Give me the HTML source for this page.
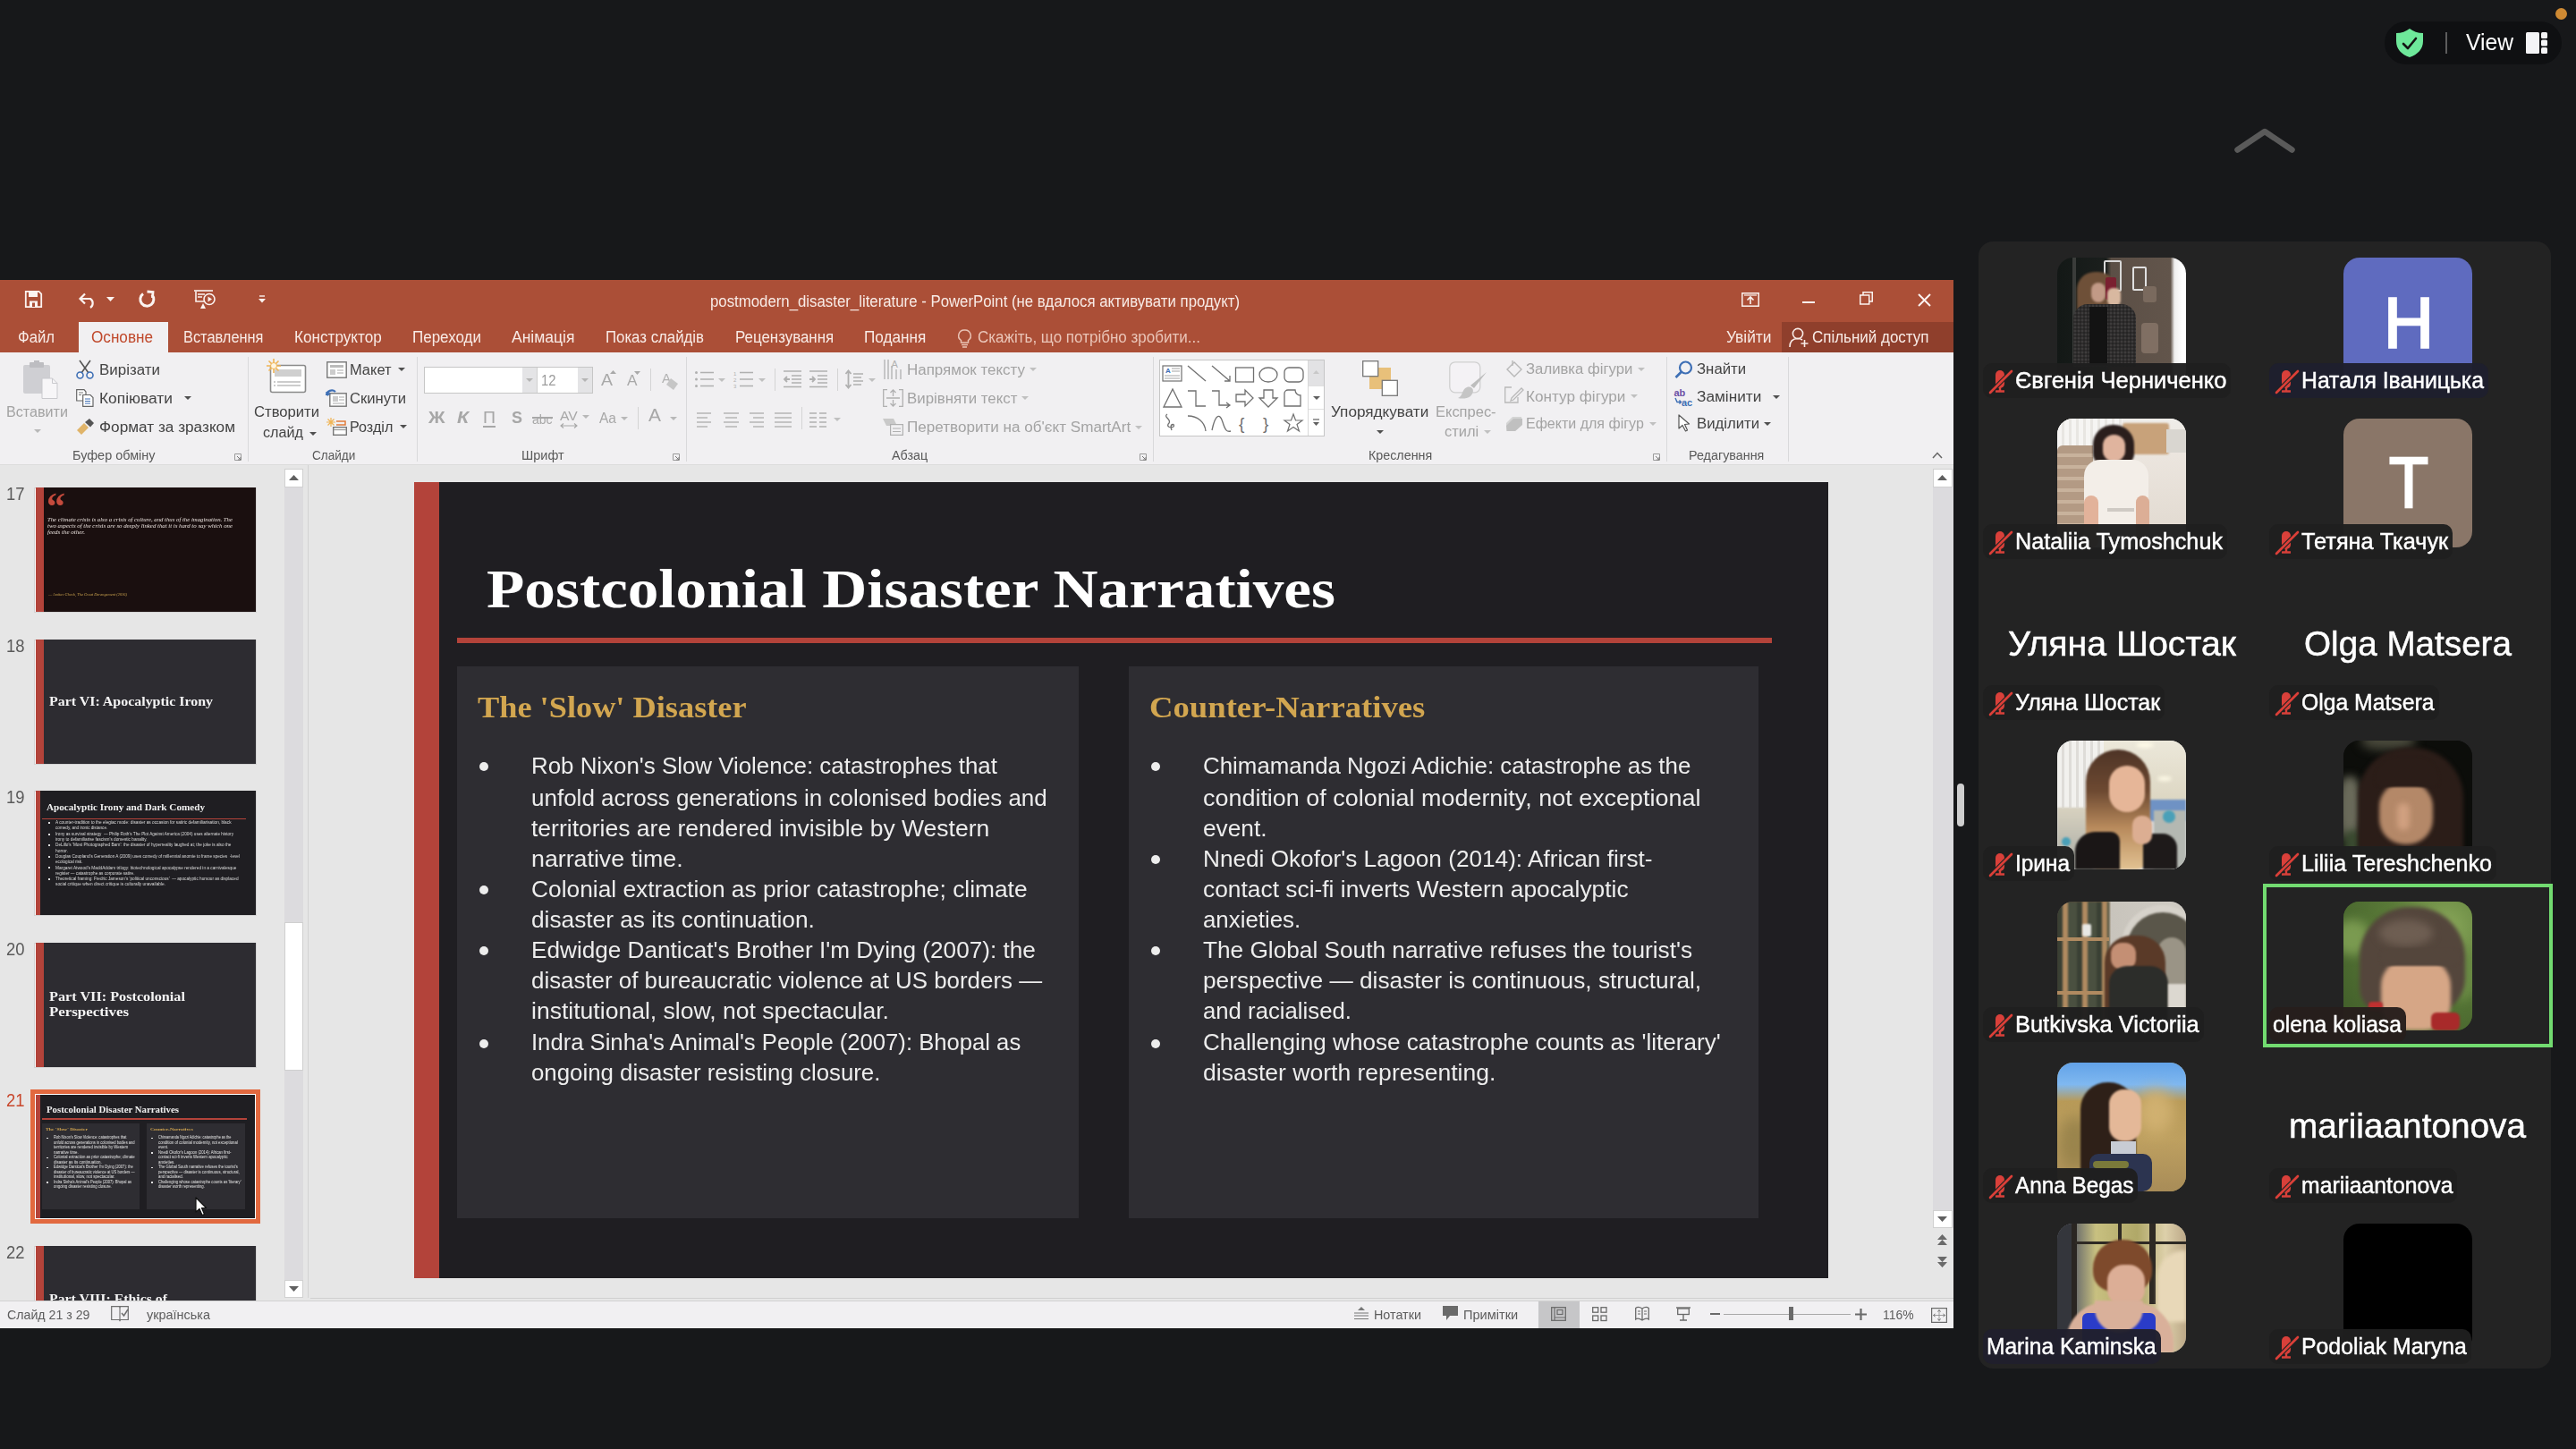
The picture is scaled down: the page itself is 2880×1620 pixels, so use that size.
<!DOCTYPE html>
<html><head><meta charset="utf-8"><title>Zoom - PowerPoint</title>
<style>
html,body{margin:0;padding:0;}
body{width:2880px;height:1620px;overflow:hidden;background:#17181a;position:relative;font-family:'Liberation Sans',sans-serif;}
.t{position:absolute;white-space:pre;}
svg{overflow:visible}
</style></head><body>
<div style="position:absolute;left:2666px;top:24px;width:198px;height:48px;background:#0f1012;border-radius:24px;"></div>
<svg style="position:absolute;left:2679px;top:32px;" width="30" height="32" viewBox="0 0 30 32"><path d="M15 0 C19 3 24 5 30 5 L30 14 C30 23 24 29 15 32 C6 29 0 23 0 14 L0 5 C6 5 11 3 15 0 Z" fill="#6ee89a"/><path d="M8 17 L13 22 L22 11" stroke="#141414" stroke-width="2.6" fill="none" stroke-linecap="round" stroke-linejoin="round"/></svg>
<div style="position:absolute;left:2734px;top:36px;width:2px;height:24px;background:#5c5c5c;"></div>
<div class="t" style="left:2757px;top:34.8px;font-size:25px;line-height:25px;color:#ffffff;font-weight:500;font-family:'Liberation Sans', sans-serif;font-style:normal;transform:scaleX(0.9860);transform-origin:0 0;">View</div>
<svg style="position:absolute;left:2824px;top:36px;" width="24" height="24" viewBox="0 0 24 24"><rect x="0" y="0" width="15" height="24" rx="1.5" fill="#f4f4f6"/><rect x="17" y="0" width="7" height="7" rx="1.5" fill="#f4f4f6"/><rect x="17" y="8.5" width="7" height="7" rx="1.5" fill="#f4f4f6"/><rect x="17" y="17" width="7" height="7" rx="1.5" fill="#f4f4f6"/></svg>
<div style="position:absolute;left:2857px;top:9px;width:13px;height:13px;border-radius:50%;background:#cf8a33"></div>
<svg style="position:absolute;left:2496px;top:140px;" width="74" height="36" viewBox="0 0 74 36"><polyline points="5.5,27.5 36,7 66.5,27.5" stroke="#5a5a5a" stroke-width="6.5" fill="none" stroke-linecap="round" stroke-linejoin="round"/></svg>
<div style="position:absolute;left:2188px;top:876px;width:8px;height:48px;background:#cfcfcf;border-radius:4px;"></div>
<div style="position:absolute;left:0px;top:313px;width:2184px;height:81px;background:#ab4f37;"></div>
<svg style="position:absolute;left:28px;top:325px;" width="19" height="19" viewBox="0 0 19 19"><path d="M0.8 0.8 H15.5 L18.2 3.5 V18.2 H0.8 Z" fill="none" stroke="#fbf3f0" stroke-width="1.8"/><rect x="4" y="1" width="10" height="6" fill="#fbf3f0"/><rect x="5" y="11.5" width="9" height="6.5" fill="#fbf3f0"/><rect x="8" y="13.5" width="3" height="4.5" fill="#ab4f37"/></svg>
<svg style="position:absolute;left:88px;top:327px;" width="21" height="17" viewBox="0 0 21 17"><path d="M2 7 H13 A6 6 0 0 1 13 17" fill="none" stroke="#fbf3f0" stroke-width="2.2"/><path d="M7 1.5 L1.5 7 L7 12.5" fill="none" stroke="#fbf3f0" stroke-width="2.2"/></svg>
<svg style="position:absolute;left:119px;top:332px;" width="9" height="5" viewBox="0 0 9 5"><path d="M0 0 H9 L4.5 5 Z" fill="#fbf3f0"/></svg>
<svg style="position:absolute;left:155px;top:325px;" width="19" height="19" viewBox="0 0 19 19"><path d="M14.8 4.5 A7.5 7.5 0 1 1 5 3.5" fill="none" stroke="#fbf3f0" stroke-width="3"/><path d="M9.5 1 L16 1.5 L15.5 8" fill="none" stroke="#fbf3f0" stroke-width="2.8"/></svg>
<svg style="position:absolute;left:217px;top:324px;" width="24" height="21" viewBox="0 0 24 21"><path d="M0 1 H21" stroke="#fbf3f0" stroke-width="1.6"/><path d="M2 2 V13 H12" fill="none" stroke="#fbf3f0" stroke-width="1.6"/><path d="M4 5 H12 M4 8 H9" stroke="#fbf3f0" stroke-width="1.4"/><circle cx="17" cy="10.5" r="6" fill="none" stroke="#fbf3f0" stroke-width="1.6"/><path d="M15.5 7.5 L20 10.5 L15.5 13.5 Z" fill="#fbf3f0"/><path d="M7 21 L10 15 L13 21 Z" fill="#fbf3f0"/></svg>
<svg style="position:absolute;left:289px;top:330px;" width="8" height="9" viewBox="0 0 8 9"><path d="M1 1 H7" stroke="#fbf3f0" stroke-width="1.4"/><path d="M0 4 H8 L4 8.5 Z" fill="#fbf3f0"/></svg>
<div class="t" style="left:794px;top:327.7px;font-size:18px;line-height:18px;color:#f8ebe6;font-weight:400;font-family:'Liberation Sans', sans-serif;font-style:normal;transform:scaleX(0.9330);transform-origin:0 0;">postmodern_disaster_literature - PowerPoint (не вдалося активувати продукт)</div>
<svg style="position:absolute;left:1947px;top:327px;" width="20" height="16" viewBox="0 0 20 16"><rect x="0.8" y="0.8" width="18.4" height="14.4" fill="none" stroke="#fbf3f0" stroke-width="1.5"/><path d="M10 13 V5 M6.5 8.5 L10 5 L13.5 8.5" fill="none" stroke="#fbf3f0" stroke-width="1.6"/><path d="M3 3 H17" stroke="#fbf3f0" stroke-width="1.2"/></svg>
<div style="position:absolute;left:2015px;top:337px;width:14px;height:2px;background:#fbf3f0;"></div>
<svg style="position:absolute;left:2079px;top:326px;" width="15" height="15" viewBox="0 0 15 15"><rect x="0.75" y="4" width="10" height="10" fill="none" stroke="#fbf3f0" stroke-width="1.5"/><path d="M4 4 V0.75 H14.25 V11 H10.75" fill="none" stroke="#fbf3f0" stroke-width="1.5"/></svg>
<svg style="position:absolute;left:2144px;top:328px;" width="15" height="15" viewBox="0 0 15 15"><path d="M1 1 L14 14 M14 1 L1 14" stroke="#fbf3f0" stroke-width="2"/></svg>
<div style="position:absolute;left:88px;top:360px;width:100px;height:34px;background:#f1f0f2;"></div>
<div class="t" style="left:20px;top:367.9px;font-size:18px;line-height:18px;color:#f8ebe6;font-weight:400;font-family:'Liberation Sans', sans-serif;font-style:normal;transform:scaleX(0.9262);transform-origin:0 0;">Файл</div>
<div class="t" style="left:102px;top:367.9px;font-size:18px;line-height:18px;color:#c0492c;font-weight:400;font-family:'Liberation Sans', sans-serif;font-style:normal;transform:scaleX(0.9521);transform-origin:0 0;">Основне</div>
<div class="t" style="left:205.4px;top:367.9px;font-size:18px;line-height:18px;color:#f8ebe6;font-weight:400;font-family:'Liberation Sans', sans-serif;font-style:normal;transform:scaleX(0.9099);transform-origin:0 0;">Вставлення</div>
<div class="t" style="left:329.2px;top:367.9px;font-size:18px;line-height:18px;color:#f8ebe6;font-weight:400;font-family:'Liberation Sans', sans-serif;font-style:normal;transform:scaleX(0.9528);transform-origin:0 0;">Конструктор</div>
<div class="t" style="left:461px;top:367.9px;font-size:18px;line-height:18px;color:#f8ebe6;font-weight:400;font-family:'Liberation Sans', sans-serif;font-style:normal;transform:scaleX(0.9442);transform-origin:0 0;">Переходи</div>
<div class="t" style="left:572.4px;top:367.9px;font-size:18px;line-height:18px;color:#f8ebe6;font-weight:400;font-family:'Liberation Sans', sans-serif;font-style:normal;transform:scaleX(0.9725);transform-origin:0 0;">Анімація</div>
<div class="t" style="left:677.3px;top:367.9px;font-size:18px;line-height:18px;color:#f8ebe6;font-weight:400;font-family:'Liberation Sans', sans-serif;font-style:normal;transform:scaleX(0.9328);transform-origin:0 0;">Показ слайдів</div>
<div class="t" style="left:821.5px;top:367.9px;font-size:18px;line-height:18px;color:#f8ebe6;font-weight:400;font-family:'Liberation Sans', sans-serif;font-style:normal;transform:scaleX(0.9391);transform-origin:0 0;">Рецензування</div>
<div class="t" style="left:966px;top:367.9px;font-size:18px;line-height:18px;color:#f8ebe6;font-weight:400;font-family:'Liberation Sans', sans-serif;font-style:normal;transform:scaleX(0.9532);transform-origin:0 0;">Подання</div>
<svg style="position:absolute;left:1071px;top:368px;" width="15" height="22" viewBox="0 0 15 22"><path d="M7.5 1 A6.3 6.3 0 0 1 11.5 12.5 V15 H3.5 V12.5 A6.3 6.3 0 0 1 7.5 1 Z" fill="none" stroke="#e9c3b5" stroke-width="1.5"/><path d="M4 17.5 H11 M5 20 H10" stroke="#e9c3b5" stroke-width="1.5"/></svg>
<div class="t" style="left:1093.2px;top:367.9px;font-size:18px;line-height:18px;color:#eac5b8;font-weight:400;font-family:'Liberation Sans', sans-serif;font-style:normal;transform:scaleX(0.9454);transform-origin:0 0;">Скажіть, що потрібно зробити...</div>
<div class="t" style="left:1929.6px;top:367.9px;font-size:18px;line-height:18px;color:#f8ebe6;font-weight:400;font-family:'Liberation Sans', sans-serif;font-style:normal;transform:scaleX(0.9648);transform-origin:0 0;">Увійти</div>
<div style="position:absolute;left:1992px;top:360px;width:192px;height:34px;background:#8f3f2c;"></div>
<svg style="position:absolute;left:2000px;top:366px;" width="23" height="23" viewBox="0 0 23 23"><circle cx="10" cy="7" r="5.6" fill="none" stroke="#f8ebe6" stroke-width="1.6"/><path d="M1 22 C1 15 5 12.5 10 12.5 C12 12.5 13.5 13 15 14" fill="none" stroke="#f8ebe6" stroke-width="1.6"/><path d="M17.5 14 V22 M13.5 18 H21.5" stroke="#f8ebe6" stroke-width="1.6"/></svg>
<div class="t" style="left:2025.6px;top:367.9px;font-size:18px;line-height:18px;color:#f8ebe6;font-weight:400;font-family:'Liberation Sans', sans-serif;font-style:normal;transform:scaleX(0.9430);transform-origin:0 0;">Спільний доступ</div>
<div style="position:absolute;left:0px;top:394px;width:2184px;height:126px;background:#f1f0f2;"></div>
<div style="position:absolute;left:0px;top:519px;width:2184px;height:1px;background:#dcdcdc;"></div>
<svg style="position:absolute;left:25px;top:403px;" width="40" height="43" viewBox="0 0 40 43"><rect x="1" y="5" width="30" height="32" rx="2" fill="#cfcfd3"/><rect x="8" y="2" width="16" height="6" rx="1" fill="#bdbdc1"/><rect x="13" y="0" width="6" height="4" fill="#bdbdc1"/><path d="M22 20 H33.5 L39 25.5 V42.5 H22 Z" fill="#f7f6f8" stroke="#c9c9cd" stroke-width="1"/><path d="M33.5 20 V25.5 H39" fill="none" stroke="#c9c9cd" stroke-width="1"/></svg>
<div class="t" style="left:7.3px;top:452.9px;font-size:16px;line-height:16px;color:#a3a3a3;font-weight:400;font-family:'Liberation Sans', sans-serif;font-style:normal;transform:scaleX(1.0084);transform-origin:0 0;">Вставити</div>
<svg style="position:absolute;left:38px;top:480px;" width="8" height="4" viewBox="0 0 8 4"><path d="M0 0 H8 L4 4 Z" fill="#b8b8b8"/></svg>
<svg style="position:absolute;left:85px;top:403px;" width="20" height="21" viewBox="0 0 20 21"><path d="M4 0 L14 14 M16 0 L6 14" stroke="#555" stroke-width="1.6"/><circle cx="4.5" cy="16.5" r="3.5" fill="none" stroke="#3e6fb5" stroke-width="1.6"/><circle cx="15.5" cy="16.5" r="3.5" fill="none" stroke="#3e6fb5" stroke-width="1.6"/></svg>
<div class="t" style="left:111px;top:406.0px;font-size:16px;line-height:16px;color:#444444;font-weight:400;font-family:'Liberation Sans', sans-serif;font-style:normal;transform:scaleX(1.0589);transform-origin:0 0;">Вирізати</div>
<svg style="position:absolute;left:85px;top:435px;" width="20" height="20" viewBox="0 0 20 20"><path d="M0.7 0.7 H9 L11 3 V13 H0.7 Z" fill="#fff" stroke="#666" stroke-width="1.2"/><path d="M7.7 6.5 H16 L19 9.5 V19.3 H7.7 Z" fill="#fff" stroke="#666" stroke-width="1.2"/><path d="M10 11 H16 M10 13.5 H16 M10 16 H16" stroke="#3e6fb5" stroke-width="1"/><path d="M3 4 H8 M3 6.5 H6" stroke="#777" stroke-width="1"/></svg>
<div class="t" style="left:111px;top:438.4px;font-size:16px;line-height:16px;color:#444444;font-weight:400;font-family:'Liberation Sans', sans-serif;font-style:normal;transform:scaleX(1.0850);transform-origin:0 0;">Копіювати</div>
<svg style="position:absolute;left:206px;top:443px;" width="8" height="4" viewBox="0 0 8 4"><path d="M0 0 H8 L4 4 Z" fill="#505050"/></svg>
<svg style="position:absolute;left:86px;top:468px;" width="20" height="18" viewBox="0 0 20 18"><path d="M0 13 L8 5 L13 10 L5 18 Z" fill="#e0b46a"/><path d="M9 4 L14 0 L19 5 L15 9.5 Z" fill="#555"/></svg>
<div class="t" style="left:111px;top:469.9px;font-size:16px;line-height:16px;color:#444444;font-weight:400;font-family:'Liberation Sans', sans-serif;font-style:normal;transform:scaleX(1.0755);transform-origin:0 0;">Формат за зразком</div>
<div class="t" style="left:81.2px;top:502.1px;font-size:14px;line-height:14px;color:#595959;font-weight:400;font-family:'Liberation Sans', sans-serif;font-style:normal;transform:scaleX(1.0315);transform-origin:0 0;">Буфер обміну</div>
<svg style="position:absolute;left:262px;top:507px;" width="8" height="8" viewBox="0 0 8 8"><path d="M0.5 0.5 H7.5 V7.5 H0.5 Z" fill="none" stroke="#9a9a9a" stroke-width="1"/><path d="M3 3 L7 7 M4 7 H7 V4" stroke="#7a7a7a" stroke-width="1" fill="none"/></svg>
<div style="position:absolute;left:277px;top:399px;width:1px;height:117px;background:#d9d9db;"></div>
<svg style="position:absolute;left:298px;top:401px;" width="45" height="39" viewBox="0 0 45 39"><rect x="4.5" y="7.5" width="39" height="30" rx="2" fill="#fff" stroke="#8a8a8a" stroke-width="1.6"/><rect x="9" y="12" width="30" height="8" fill="#cfcfcf"/><path d="M12 26 H38 M12 30 H38 M8 26 H10 M8 30 H10" stroke="#9a9a9a" stroke-width="1.2"/><g stroke="#f0b455" stroke-width="1.6"><path d="M8 0 V16 M0 8 H16 M2.5 2.5 L13.5 13.5 M13.5 2.5 L2.5 13.5"/></g><circle cx="8" cy="8" r="3.5" fill="#fff5e0" stroke="#f0b455" stroke-width="1"/></svg>
<div class="t" style="left:284.3px;top:452.9px;font-size:16px;line-height:16px;color:#444444;font-weight:400;font-family:'Liberation Sans', sans-serif;font-style:normal;transform:scaleX(1.0398);transform-origin:0 0;">Створити</div>
<div class="t" style="left:293.7px;top:476.4px;font-size:16px;line-height:16px;color:#444444;font-weight:400;font-family:'Liberation Sans', sans-serif;font-style:normal;transform:scaleX(1.0109);transform-origin:0 0;">слайд</div>
<svg style="position:absolute;left:346px;top:483px;" width="8" height="4" viewBox="0 0 8 4"><path d="M0 0 H8 L4 4 Z" fill="#505050"/></svg>
<svg style="position:absolute;left:365px;top:404px;" width="23" height="19" viewBox="0 0 23 19"><rect x="0.8" y="0.8" width="21.4" height="17.4" fill="#fff" stroke="#777" stroke-width="1.4"/><rect x="4" y="4" width="15" height="3" fill="#bbb"/><rect x="4" y="9" width="6" height="6" fill="#ccc"/><path d="M12 10 H19 M12 13 H19" stroke="#aaa" stroke-width="1.2"/></svg>
<div class="t" style="left:391.4px;top:406.0px;font-size:16px;line-height:16px;color:#444444;font-weight:400;font-family:'Liberation Sans', sans-serif;font-style:normal;transform:scaleX(1.0269);transform-origin:0 0;">Макет</div>
<svg style="position:absolute;left:445px;top:411px;" width="8" height="4" viewBox="0 0 8 4"><path d="M0 0 H8 L4 4 Z" fill="#505050"/></svg>
<svg style="position:absolute;left:364px;top:435px;" width="24" height="20" viewBox="0 0 24 20"><rect x="4.8" y="4.8" width="18.4" height="14.4" fill="#fff" stroke="#777" stroke-width="1.4"/><rect x="8" y="8" width="6" height="6" fill="#ccc"/><path d="M15 9 H21 M15 12 H21 M8 16 H21" stroke="#aaa" stroke-width="1.2"/><path d="M1 7 A6 6 0 0 1 11 3" fill="none" stroke="#3e6fb5" stroke-width="2.2"/><path d="M0 3 L2 8 L6 5 Z" fill="#3e6fb5"/></svg>
<div class="t" style="left:391.4px;top:438.0px;font-size:16px;line-height:16px;color:#444444;font-weight:400;font-family:'Liberation Sans', sans-serif;font-style:normal;transform:scaleX(1.0397);transform-origin:0 0;">Скинути</div>
<svg style="position:absolute;left:365px;top:467px;" width="23" height="20" viewBox="0 0 23 20"><g stroke="#f0b455" stroke-width="1.2"><path d="M5 0 V10 M0 5 H10 M1.5 1.5 L8.5 8.5 M8.5 1.5 L1.5 8.5"/></g><path d="M11 4 H21 V8 H11" fill="none" stroke="#e07b3b" stroke-width="1.5"/><rect x="7.7" y="10.7" width="14.6" height="8.6" fill="#fff" stroke="#777" stroke-width="1.4"/><path d="M8 13.5 H22" stroke="#999" stroke-width="1.2"/></svg>
<div class="t" style="left:391.4px;top:469.9px;font-size:16px;line-height:16px;color:#444444;font-weight:400;font-family:'Liberation Sans', sans-serif;font-style:normal;transform:scaleX(1.0082);transform-origin:0 0;">Розділ</div>
<svg style="position:absolute;left:447px;top:475px;" width="8" height="4" viewBox="0 0 8 4"><path d="M0 0 H8 L4 4 Z" fill="#505050"/></svg>
<div class="t" style="left:348.5px;top:502.1px;font-size:14px;line-height:14px;color:#595959;font-weight:400;font-family:'Liberation Sans', sans-serif;font-style:normal;transform:scaleX(0.9684);transform-origin:0 0;">Слайди</div>
<div style="position:absolute;left:466px;top:399px;width:1px;height:117px;background:#d9d9db;"></div>
<div style="position:absolute;left:473.5px;top:410px;width:189px;height:30px;background:#ffffff;box-sizing:border-box;border:1px solid #c6c6c6;"></div>
<div style="position:absolute;left:583.5px;top:411px;width:16px;height:28px;background:#e4e4e6;"></div>
<div style="position:absolute;left:600px;top:411px;width:1px;height:28px;background:#d0d0d0;"></div>
<div style="position:absolute;left:646px;top:411px;width:15.5px;height:28px;background:#e4e4e6;"></div>
<svg style="position:absolute;left:588px;top:423px;" width="8" height="4" viewBox="0 0 8 4"><path d="M0 0 H8 L4 4 Z" fill="#b5b5b5"/></svg>
<svg style="position:absolute;left:650px;top:423px;" width="8" height="4" viewBox="0 0 8 4"><path d="M0 0 H8 L4 4 Z" fill="#b5b5b5"/></svg>
<div class="t" style="left:605.4px;top:418.0px;font-size:16px;line-height:16px;color:#9c9c9c;font-weight:400;font-family:'Liberation Sans', sans-serif;font-style:normal;transform:scaleX(0.9271);transform-origin:0 0;">12</div>
<div class="t" style="left:672px;top:416.3px;font-size:18px;line-height:18px;color:#a9a9a9;font-weight:400;font-family:'Liberation Sans', sans-serif;font-style:normal;transform:scaleX(1.0819);transform-origin:0 0;">A</div>
<svg style="position:absolute;left:682px;top:414px;" width="7" height="4" viewBox="0 0 7 4"><path d="M0 4 L3.5 0 L7 4 Z" fill="#a9a9a9"/></svg>
<div class="t" style="left:700.8px;top:418.0px;font-size:16px;line-height:16px;color:#a9a9a9;font-weight:400;font-family:'Liberation Sans', sans-serif;font-style:normal;transform:scaleX(1.0776);transform-origin:0 0;">A</div>
<svg style="position:absolute;left:709px;top:415px;" width="7" height="4" viewBox="0 0 7 4"><path d="M0 0 L3.5 4 L7 0 Z" fill="#a9a9a9"/></svg>
<div style="position:absolute;left:727px;top:412px;width:1px;height:25px;background:#d4d4d4;"></div>
<div class="t" style="left:740px;top:416.1px;font-size:14px;line-height:14px;color:#b3b3b3;font-weight:400;font-family:'Liberation Sans', sans-serif;font-style:normal;transform:scaleX(1.0702);transform-origin:0 0;">A</div>
<svg style="position:absolute;left:745px;top:423px;" width="13" height="13" viewBox="0 0 13 13"><path d="M5 0 L13 6 L8 13 L0 7 Z" fill="#c6c6c6"/></svg>
<div class="t" style="left:478.8px;top:457.2px;font-size:19px;line-height:19px;color:#a7a7a7;font-weight:700;font-family:'Liberation Sans', sans-serif;font-style:normal;transform:scaleX(1.0764);transform-origin:0 0;">Ж</div>
<div class="t" style="left:510.8px;top:457.2px;font-size:19px;line-height:19px;color:#a7a7a7;font-weight:700;font-family:'Liberation Sans', sans-serif;font-style:normal;transform:scaleX(1.1198);transform-origin:0 0;font-style:italic;">К</div>
<div class="t" style="left:539.7px;top:458.0px;font-size:18px;line-height:18px;color:#a7a7a7;font-weight:400;font-family:'Liberation Sans', sans-serif;font-style:normal;transform:scaleX(1.0821);transform-origin:0 0;">П</div>
<div style="position:absolute;left:539.5px;top:476px;width:14.5px;height:1.5px;background:#a7a7a7;"></div>
<div class="t" style="left:571.7px;top:457.2px;font-size:19px;line-height:19px;color:#a7a7a7;font-weight:700;font-family:'Liberation Sans', sans-serif;font-style:normal;transform:scaleX(0.9458);transform-origin:0 0;">S</div>
<div class="t" style="left:595.2px;top:460.6px;font-size:15px;line-height:15px;color:#a7a7a7;font-weight:400;font-family:'Liberation Sans', sans-serif;font-style:normal;transform:scaleX(0.9302);transform-origin:0 0;">abc</div>
<div style="position:absolute;left:595px;top:466px;width:23px;height:1.5px;background:#a7a7a7;"></div>
<div class="t" style="left:626px;top:457.2px;font-size:15px;line-height:15px;color:#a7a7a7;font-weight:400;font-family:'Liberation Sans', sans-serif;font-style:normal;transform:scaleX(1.0420);transform-origin:0 0;">AV</div>
<svg style="position:absolute;left:626px;top:473px;" width="20" height="6" viewBox="0 0 20 6"><path d="M1 3 H19 M4 0.5 L1 3 L4 5.5 M16 0.5 L19 3 L16 5.5" fill="none" stroke="#a7a7a7" stroke-width="1.1"/></svg>
<svg style="position:absolute;left:651px;top:464px;" width="8" height="4" viewBox="0 0 8 4"><path d="M0 0 H8 L4 4 Z" fill="#b8b8b8"/></svg>
<div class="t" style="left:670px;top:458.9px;font-size:17px;line-height:17px;color:#a7a7a7;font-weight:400;font-family:'Liberation Sans', sans-serif;font-style:normal;transform:scaleX(0.9136);transform-origin:0 0;">Aa</div>
<svg style="position:absolute;left:694px;top:466px;" width="8" height="4" viewBox="0 0 8 4"><path d="M0 0 H8 L4 4 Z" fill="#b8b8b8"/></svg>
<div style="position:absolute;left:712.5px;top:455px;width:1px;height:25px;background:#d4d4d4;"></div>
<div class="t" style="left:725.4px;top:453.1px;font-size:21px;line-height:21px;color:#a7a7a7;font-weight:400;font-family:'Liberation Sans', sans-serif;font-style:normal;transform:scaleX(0.9989);transform-origin:0 0;">A</div>
<svg style="position:absolute;left:749px;top:466px;" width="8" height="4" viewBox="0 0 8 4"><path d="M0 0 H8 L4 4 Z" fill="#b8b8b8"/></svg>
<div class="t" style="left:582.8px;top:502.1px;font-size:14px;line-height:14px;color:#595959;font-weight:400;font-family:'Liberation Sans', sans-serif;font-style:normal;transform:scaleX(1.0334);transform-origin:0 0;">Шрифт</div>
<svg style="position:absolute;left:752px;top:507px;" width="8" height="8" viewBox="0 0 8 8"><path d="M0.5 0.5 H7.5 V7.5 H0.5 Z" fill="none" stroke="#9a9a9a" stroke-width="1"/><path d="M3 3 L7 7 M4 7 H7 V4" stroke="#7a7a7a" stroke-width="1" fill="none"/></svg>
<div style="position:absolute;left:767px;top:399px;width:1px;height:117px;background:#d9d9db;"></div>
<svg style="position:absolute;left:777px;top:415px;" width="21" height="18" viewBox="0 0 21 18"><circle cx="1.5" cy="1.5" r="1.5" fill="#b0b0b0"/><circle cx="1.5" cy="9" r="1.5" fill="#b0b0b0"/><circle cx="1.5" cy="16.5" r="1.5" fill="#b0b0b0"/><path d="M6 1.5 H21 M6 9 H21 M6 16.5 H21" stroke="#b0b0b0" stroke-width="1.4"/></svg>
<svg style="position:absolute;left:803px;top:423px;" width="8" height="4" viewBox="0 0 8 4"><path d="M0 0 H8 L4 4 Z" fill="#c0c0c0"/></svg>
<svg style="position:absolute;left:820px;top:414px;" width="22" height="20" viewBox="0 0 22 20"><text x="0" y="6" font-size="6" fill="#b0b0b0" font-family="Liberation Sans">1</text><text x="0" y="13" font-size="6" fill="#b0b0b0" font-family="Liberation Sans">2</text><text x="0" y="20" font-size="6" fill="#b0b0b0" font-family="Liberation Sans">3</text><path d="M7 2.5 H22 M7 10 H22 M7 17.5 H22" stroke="#b0b0b0" stroke-width="1.4"/></svg>
<svg style="position:absolute;left:848px;top:423px;" width="8" height="4" viewBox="0 0 8 4"><path d="M0 0 H8 L4 4 Z" fill="#c0c0c0"/></svg>
<div style="position:absolute;left:866px;top:412px;width:1px;height:25px;background:#d4d4d4;"></div>
<svg style="position:absolute;left:876px;top:414px;" width="21" height="19" viewBox="0 0 21 19"><path d="M0 1 H20 M9 6 H20 M9 10 H20 M9 14 H20 M0 18.5 H20" stroke="#b0b0b0" stroke-width="1.4"/><path d="M7 10 H1 M4 7 L1 10 L4 13" stroke="#b0b0b0" stroke-width="1.8" fill="none"/></svg>
<svg style="position:absolute;left:905px;top:414px;" width="21" height="19" viewBox="0 0 21 19"><path d="M0 1 H20 M9 6 H20 M9 10 H20 M9 14 H20 M0 18.5 H20" stroke="#b0b0b0" stroke-width="1.4"/><path d="M0 10 H6 M3 7 L6 10 L3 13" stroke="#b0b0b0" stroke-width="1.8" fill="none"/></svg>
<div style="position:absolute;left:935.5px;top:412px;width:1px;height:25px;background:#d4d4d4;"></div>
<svg style="position:absolute;left:945px;top:413px;" width="20" height="22" viewBox="0 0 20 22"><path d="M3.5 2 V20 M0.5 5 L3.5 1.5 L6.5 5 M0.5 17 L3.5 20.5 L6.5 17" stroke="#b0b0b0" stroke-width="1.8" fill="none"/><path d="M9 5 H20 M9 9 H18 M9 13 H20 M9 17 H18" stroke="#b0b0b0" stroke-width="1.4"/></svg>
<svg style="position:absolute;left:971px;top:423px;" width="8" height="4" viewBox="0 0 8 4"><path d="M0 0 H8 L4 4 Z" fill="#c0c0c0"/></svg>
<svg style="position:absolute;left:779px;top:461px;" width="20" height="18" viewBox="0 0 20 18"><path d="M0 1 H16" stroke="#b0b0b0" stroke-width="1.4"/><path d="M0 6 H12" stroke="#b0b0b0" stroke-width="1.4"/><path d="M0 11 H16" stroke="#b0b0b0" stroke-width="1.4"/><path d="M0 16 H12" stroke="#b0b0b0" stroke-width="1.4"/></svg>
<svg style="position:absolute;left:807.5px;top:461px;" width="20" height="18" viewBox="0 0 20 18"><path d="M1 1 H18" stroke="#b0b0b0" stroke-width="1.4"/><path d="M3 6 H16" stroke="#b0b0b0" stroke-width="1.4"/><path d="M1 11 H18" stroke="#b0b0b0" stroke-width="1.4"/><path d="M3 16 H16" stroke="#b0b0b0" stroke-width="1.4"/></svg>
<svg style="position:absolute;left:838px;top:461px;" width="20" height="18" viewBox="0 0 20 18"><path d="M0 1 H16" stroke="#b0b0b0" stroke-width="1.4"/><path d="M4 6 H16" stroke="#b0b0b0" stroke-width="1.4"/><path d="M0 11 H16" stroke="#b0b0b0" stroke-width="1.4"/><path d="M4 16 H16" stroke="#b0b0b0" stroke-width="1.4"/></svg>
<svg style="position:absolute;left:866px;top:461px;" width="20" height="18" viewBox="0 0 20 18"><path d="M0 1 H19" stroke="#b0b0b0" stroke-width="1.4"/><path d="M0 6 H19" stroke="#b0b0b0" stroke-width="1.4"/><path d="M0 11 H19" stroke="#b0b0b0" stroke-width="1.4"/><path d="M0 16 H19" stroke="#b0b0b0" stroke-width="1.4"/></svg>
<div style="position:absolute;left:896px;top:455px;width:1px;height:25px;background:#d4d4d4;"></div>
<svg style="position:absolute;left:905px;top:461px;" width="20" height="18" viewBox="0 0 20 18"><path d="M0 1 H8 M11 1 H19" stroke="#b0b0b0" stroke-width="1.4"/><path d="M0 6 H8 M11 6 H19" stroke="#b0b0b0" stroke-width="1.4"/><path d="M0 11 H8 M11 11 H19" stroke="#b0b0b0" stroke-width="1.4"/><path d="M0 16 H8 M11 16 H19" stroke="#b0b0b0" stroke-width="1.4"/></svg>
<svg style="position:absolute;left:932px;top:467px;" width="8" height="4" viewBox="0 0 8 4"><path d="M0 0 H8 L4 4 Z" fill="#c0c0c0"/></svg>
<svg style="position:absolute;left:988px;top:401px;" width="22" height="24" viewBox="0 0 22 24"><path d="M1 1 V23 M5 1 V23 M9 8 V23 M14 12 V23 M19 12 V23" stroke="#b0b0b0" stroke-width="1.3"/><text x="8.5" y="10" font-size="11" fill="#b0b0b0" font-family="Liberation Sans">A</text></svg>
<div class="t" style="left:1014px;top:406.1px;font-size:16px;line-height:16px;color:#a3a3a3;font-weight:400;font-family:'Liberation Sans', sans-serif;font-style:normal;transform:scaleX(1.0596);transform-origin:0 0;">Напрямок тексту</div>
<svg style="position:absolute;left:1151px;top:411px;" width="8" height="4" viewBox="0 0 8 4"><path d="M0 0 H8 L4 4 Z" fill="#c0c0c0"/></svg>
<svg style="position:absolute;left:987px;top:435px;" width="23" height="20" viewBox="0 0 23 20"><path d="M5 0.7 H0.7 V19.3 H5 M18 0.7 H22.3 V19.3 H18" fill="none" stroke="#b0b0b0" stroke-width="1.3"/><path d="M11.5 1 V8 M8.5 4 L11.5 1 L14.5 4 M11.5 12 V19 M8.5 16 L11.5 19 L14.5 16 M4 10 H19" fill="none" stroke="#b0b0b0" stroke-width="1.3"/></svg>
<div class="t" style="left:1014px;top:438.0px;font-size:16px;line-height:16px;color:#a3a3a3;font-weight:400;font-family:'Liberation Sans', sans-serif;font-style:normal;transform:scaleX(1.0518);transform-origin:0 0;">Вирівняти текст</div>
<svg style="position:absolute;left:1142px;top:443px;" width="8" height="4" viewBox="0 0 8 4"><path d="M0 0 H8 L4 4 Z" fill="#c0c0c0"/></svg>
<svg style="position:absolute;left:987px;top:467px;" width="23" height="20" viewBox="0 0 23 20"><path d="M0 1 H12 L16 9 H4 Z" fill="#c9c9c9"/><rect x="8.6" y="7.6" width="13.8" height="11.8" fill="#f1f0f2" stroke="#b0b0b0" stroke-width="1.2"/><path d="M11 12 H20 M11 15.5 H20" stroke="#b0b0b0" stroke-width="1.1"/></svg>
<div class="t" style="left:1014px;top:470.4px;font-size:16px;line-height:16px;color:#a3a3a3;font-weight:400;font-family:'Liberation Sans', sans-serif;font-style:normal;transform:scaleX(1.0679);transform-origin:0 0;">Перетворити на об&#x27;єкт SmartArt</div>
<svg style="position:absolute;left:1269px;top:476px;" width="8" height="4" viewBox="0 0 8 4"><path d="M0 0 H8 L4 4 Z" fill="#c0c0c0"/></svg>
<div class="t" style="left:996.9px;top:502.1px;font-size:14px;line-height:14px;color:#595959;font-weight:400;font-family:'Liberation Sans', sans-serif;font-style:normal;transform:scaleX(1.0208);transform-origin:0 0;">Абзац</div>
<svg style="position:absolute;left:1274px;top:507px;" width="8" height="8" viewBox="0 0 8 8"><path d="M0.5 0.5 H7.5 V7.5 H0.5 Z" fill="none" stroke="#9a9a9a" stroke-width="1"/><path d="M3 3 L7 7 M4 7 H7 V4" stroke="#7a7a7a" stroke-width="1" fill="none"/></svg>
<div style="position:absolute;left:1289px;top:399px;width:1px;height:117px;background:#d9d9db;"></div>
<div style="position:absolute;left:1296px;top:401.5px;width:185px;height:86px;background:#ffffff;box-sizing:border-box;border:1px solid #c6c6c6;"></div>
<div style="position:absolute;left:1462px;top:402.5px;width:1px;height:84px;background:#d8d8d8;"></div>
<div style="position:absolute;left:1463px;top:402.5px;width:17px;height:28px;background:#e2e2e4;"></div>
<div style="position:absolute;left:1463px;top:431px;width:17px;height:1px;background:#e0e0e0;"></div>
<div style="position:absolute;left:1463px;top:457px;width:17px;height:1px;background:#e0e0e0;"></div>
<svg style="position:absolute;left:1468px;top:414px;" width="7" height="4" viewBox="0 0 7 4"><path d="M0 4 L3.5 0 L7 4 Z" fill="#c8c8c8"/></svg>
<svg style="position:absolute;left:1468px;top:443px;" width="8" height="4" viewBox="0 0 8 4"><path d="M0 0 H8 L4 4 Z" fill="#606060"/></svg>
<svg style="position:absolute;left:1468px;top:468px;" width="7" height="8" viewBox="0 0 7 8"><path d="M0 1 H7" stroke="#606060" stroke-width="1.2"/><path d="M0 4 H7 L3.5 8 Z" fill="#606060"/></svg>
<svg style="position:absolute;left:1296px;top:401.5px;" width="166" height="86" viewBox="0 0 166 86"><rect x="4" y="7" width="21" height="17" fill="#fff" stroke="#707070" stroke-width="1.2"/><text x="7" y="15" font-size="8" font-weight="bold" fill="#3e6fb5" font-family="Liberation Sans">A</text><path d="M14 10 H23 M14 13 H23 M6 18 H23 M6 21 H23" stroke="#999" stroke-width="0.9"/><path d="M32 7 L52 24" stroke="#707070" stroke-width="1.3"/><path d="M59 7 L79 24 M73 24 H79 V18" stroke="#707070" stroke-width="1.3" fill="none"/><rect x="85.5" y="9" width="20" height="16" fill="none" stroke="#707070" stroke-width="1.3"/><ellipse cx="122" cy="17" rx="10" ry="8" fill="none" stroke="#707070" stroke-width="1.3"/><rect x="140" y="9" width="21" height="16" rx="5" fill="none" stroke="#707070" stroke-width="1.3"/><path d="M5 53 L15 33 L25 53 Z" fill="none" stroke="#707070" stroke-width="1.3"/><path d="M32 35 H41 V52 H52" fill="none" stroke="#707070" stroke-width="1.3"/><path d="M59 35 H67 V51 H79 M75 48 L79 51 L75 54" fill="none" stroke="#707070" stroke-width="1.3"/><path d="M86 39 H96 V34 L105 43 L96 52 V47 H86 Z" fill="none" stroke="#707070" stroke-width="1.3"/><path d="M117 34 H127 V43 H132 L122 53 L112 43 H117 Z" fill="none" stroke="#707070" stroke-width="1.3"/><path d="M140 52 V38 A4 4 0 0 1 144 34 H152 A6 6 0 0 0 158 40 V52 Z" fill="none" stroke="#707070" stroke-width="1.3"/><path d="M9 61 C4 64 14 67 11 71 C7 75 13 77 16 75 C18 72 13 71 13 76 L14 79" fill="none" stroke="#707070" stroke-width="1.3"/><path d="M32 63 C43 63 51 70 52 80" fill="none" stroke="#707070" stroke-width="1.3"/><path d="M59 79 C63 60 68 60 71 70 C74 80 76 81 80 80" fill="none" stroke="#707070" stroke-width="1.3"/><text x="89" y="78" font-size="19" fill="#707070" font-family="Liberation Sans">{</text><text x="116" y="78" font-size="19" fill="#707070" font-family="Liberation Sans">}</text><path d="M150 61 L152.5 68 H160 L154 72.5 L156.5 80 L150 75.5 L143.5 80 L146 72.5 L140 68 H147.5 Z" fill="none" stroke="#707070" stroke-width="1.2"/></svg>
<svg style="position:absolute;left:1523px;top:403px;" width="40" height="40" viewBox="0 0 40 40"><rect x="8" y="8" width="24" height="24" fill="#e8c07a"/><rect x="0.7" y="0.7" width="17" height="17" fill="#fff" stroke="#777" stroke-width="1.3"/><rect x="22.3" y="22.3" width="17" height="17" fill="#fff" stroke="#777" stroke-width="1.3"/></svg>
<div class="t" style="left:1487.8px;top:453.1px;font-size:16px;line-height:16px;color:#444444;font-weight:400;font-family:'Liberation Sans', sans-serif;font-style:normal;transform:scaleX(1.0711);transform-origin:0 0;">Упорядкувати</div>
<svg style="position:absolute;left:1539px;top:481px;" width="8" height="4" viewBox="0 0 8 4"><path d="M0 0 H8 L4 4 Z" fill="#505050"/></svg>
<svg style="position:absolute;left:1620px;top:404px;" width="42" height="42" viewBox="0 0 42 42"><rect x="0.8" y="0.8" width="34" height="34" rx="6" fill="#f4f2f5" stroke="#d0d0d0" stroke-width="1.3"/><path d="M42 12 L28 30 L24 27 Z" fill="#bdbdbd"/><path d="M20 29 C26 27 30 33 24 39 C20 42 14 42 10 41 C16 39 14 31 20 29 Z" fill="#c5c5c5"/></svg>
<div class="t" style="left:1604.6px;top:453.1px;font-size:16px;line-height:16px;color:#a3a3a3;font-weight:400;font-family:'Liberation Sans', sans-serif;font-style:normal;transform:scaleX(1.0299);transform-origin:0 0;">Експрес-</div>
<div class="t" style="left:1614.5px;top:474.6px;font-size:16px;line-height:16px;color:#a3a3a3;font-weight:400;font-family:'Liberation Sans', sans-serif;font-style:normal;transform:scaleX(1.0254);transform-origin:0 0;">стилі</div>
<svg style="position:absolute;left:1659px;top:481px;" width="8" height="4" viewBox="0 0 8 4"><path d="M0 0 H8 L4 4 Z" fill="#c0c0c0"/></svg>
<svg style="position:absolute;left:1683px;top:403px;" width="20" height="19" viewBox="0 0 20 19"><path d="M2 10 L10 2 L18 10 L10 18 Z" fill="none" stroke="#b8b8b8" stroke-width="1.4"/><path d="M8 0 V6" stroke="#b8b8b8" stroke-width="1.4"/></svg>
<div class="t" style="left:1706px;top:405.4px;font-size:16px;line-height:16px;color:#a3a3a3;font-weight:400;font-family:'Liberation Sans', sans-serif;font-style:normal;transform:scaleX(1.0442);transform-origin:0 0;">Заливка фігури</div>
<svg style="position:absolute;left:1831px;top:411px;" width="8" height="4" viewBox="0 0 8 4"><path d="M0 0 H8 L4 4 Z" fill="#c0c0c0"/></svg>
<svg style="position:absolute;left:1682px;top:432px;" width="22" height="19" viewBox="0 0 22 19"><path d="M8 1 H0.7 V18 H15 V12" fill="none" stroke="#b8b8b8" stroke-width="1.3"/><path d="M8 13 L19 2 L21 4 L10 15 L7 16 Z" fill="none" stroke="#b8b8b8" stroke-width="1.3"/></svg>
<div class="t" style="left:1706px;top:435.9px;font-size:16px;line-height:16px;color:#a3a3a3;font-weight:400;font-family:'Liberation Sans', sans-serif;font-style:normal;transform:scaleX(1.0718);transform-origin:0 0;">Контур фігури</div>
<svg style="position:absolute;left:1823px;top:441px;" width="8" height="4" viewBox="0 0 8 4"><path d="M0 0 H8 L4 4 Z" fill="#c0c0c0"/></svg>
<svg style="position:absolute;left:1682px;top:464px;" width="21" height="19" viewBox="0 0 21 19"><path d="M2 9 L9 2 H19 L20 10 L12 18 H2 Z" fill="#d4d4d4"/><path d="M2 12 L10 4 L20 4 V11 L12 18 H3 Z" fill="#c0c0c0"/></svg>
<div class="t" style="left:1706px;top:466.4px;font-size:16px;line-height:16px;color:#a3a3a3;font-weight:400;font-family:'Liberation Sans', sans-serif;font-style:normal;transform:scaleX(1.0009);transform-origin:0 0;">Ефекти для фігур</div>
<svg style="position:absolute;left:1844px;top:472px;" width="8" height="4" viewBox="0 0 8 4"><path d="M0 0 H8 L4 4 Z" fill="#c0c0c0"/></svg>
<div class="t" style="left:1529.7px;top:502.1px;font-size:14px;line-height:14px;color:#595959;font-weight:400;font-family:'Liberation Sans', sans-serif;font-style:normal;transform:scaleX(1.0210);transform-origin:0 0;">Креслення</div>
<svg style="position:absolute;left:1848px;top:507px;" width="8" height="8" viewBox="0 0 8 8"><path d="M0.5 0.5 H7.5 V7.5 H0.5 Z" fill="none" stroke="#9a9a9a" stroke-width="1"/><path d="M3 3 L7 7 M4 7 H7 V4" stroke="#7a7a7a" stroke-width="1" fill="none"/></svg>
<div style="position:absolute;left:1863px;top:399px;width:1px;height:117px;background:#d9d9db;"></div>
<svg style="position:absolute;left:1872px;top:403px;" width="21" height="20" viewBox="0 0 21 20"><circle cx="12.5" cy="8" r="6.5" fill="none" stroke="#3e6fb5" stroke-width="2.2"/><path d="M8 12.5 L1.5 19" stroke="#3e6fb5" stroke-width="2.6"/></svg>
<div class="t" style="left:1897.3px;top:405.4px;font-size:16px;line-height:16px;color:#444444;font-weight:400;font-family:'Liberation Sans', sans-serif;font-style:normal;transform:scaleX(1.0473);transform-origin:0 0;">Знайти</div>
<svg style="position:absolute;left:1871px;top:433px;" width="23" height="21" viewBox="0 0 23 21"><text x="0.5" y="9.5" font-size="11" font-weight="bold" fill="#6a4fa5" font-family="Liberation Sans">ab</text><text x="9" y="20.5" font-size="11" font-weight="bold" fill="#3e6fb5" font-family="Liberation Sans">ac</text><path d="M2 12 L4 16.5 H8.5 M6.5 14.5 L8.5 16.5 L6.5 18.5" fill="none" stroke="#3e6fb5" stroke-width="1.4"/></svg>
<div class="t" style="left:1897.3px;top:435.9px;font-size:16px;line-height:16px;color:#444444;font-weight:400;font-family:'Liberation Sans', sans-serif;font-style:normal;transform:scaleX(1.0766);transform-origin:0 0;">Замінити</div>
<svg style="position:absolute;left:1982px;top:442px;" width="8" height="4" viewBox="0 0 8 4"><path d="M0 0 H8 L4 4 Z" fill="#505050"/></svg>
<svg style="position:absolute;left:1876px;top:463px;" width="14" height="20" viewBox="0 0 14 20"><path d="M1 1 L1 16 L5 12.5 L8.5 19 L10.5 18 L7.5 11.5 L12.5 11 Z" fill="#fff" stroke="#555" stroke-width="1.2" stroke-linejoin="round"/></svg>
<div class="t" style="left:1897.3px;top:466.4px;font-size:16px;line-height:16px;color:#444444;font-weight:400;font-family:'Liberation Sans', sans-serif;font-style:normal;transform:scaleX(1.0455);transform-origin:0 0;">Виділити</div>
<svg style="position:absolute;left:1972px;top:472px;" width="8" height="4" viewBox="0 0 8 4"><path d="M0 0 H8 L4 4 Z" fill="#505050"/></svg>
<div class="t" style="left:1888px;top:502.1px;font-size:14px;line-height:14px;color:#595959;font-weight:400;font-family:'Liberation Sans', sans-serif;font-style:normal;transform:scaleX(1.0234);transform-origin:0 0;">Редагування</div>
<div style="position:absolute;left:1999px;top:399px;width:1px;height:117px;background:#d9d9db;"></div>
<svg style="position:absolute;left:2160px;top:505px;" width="12" height="8" viewBox="0 0 12 8"><path d="M1 7 L6 1.5 L11 7" fill="none" stroke="#666" stroke-width="1.5"/></svg>
<div style="position:absolute;left:0px;top:520px;width:2184px;height:934px;background:#e6e6e6;"></div>
<div style="position:absolute;left:318px;top:524px;width:21px;height:927px;background:#dcdbde;"></div>
<div style="position:absolute;left:318px;top:524px;width:21px;height:20.5px;background:#ffffff;box-sizing:border-box;border:1px solid #d0d0d0;"></div>
<svg style="position:absolute;left:323px;top:531px;" width="11" height="6" viewBox="0 0 11 6"><path d="M0 6 L5.5 0 L11 6 Z" fill="#606060"/></svg>
<div style="position:absolute;left:318px;top:1031px;width:21px;height:166px;background:#ffffff;box-sizing:border-box;border:1px solid #cfcfcf;"></div>
<div style="position:absolute;left:318px;top:1430.5px;width:21px;height:20.5px;background:#ffffff;box-sizing:border-box;border:1px solid #d0d0d0;"></div>
<svg style="position:absolute;left:323px;top:1438.0px;" width="11" height="6" viewBox="0 0 11 6"><path d="M0 0 H11 L5.5 6 Z" fill="#606060"/></svg>
<div style="position:absolute;left:344px;top:520px;width:1px;height:931px;background:#d2d2d2;"></div>
<div style="position:absolute;left:37.7px;top:544.5px;width:249.8px;height:140.3px;background:#ffffff;box-sizing:border-box;border:1px solid #d3d3d3;"></div>
<div style="position:absolute;left:40px;top:545px;width:246px;height:139px;background:#1a0f0f;"></div>
<div style="position:absolute;left:40px;top:545px;width:9px;height:139px;background:#b3433a;"></div>
<div class="t" style="left:52px;top:543.6px;font-size:45px;line-height:45px;color:#c44a3c;font-weight:700;font-family:'Liberation Serif', serif;font-style:normal;transform:scaleX(0.9333);transform-origin:0 0;">“</div>
<div class="t" style="left:53px;top:577.5px;font-size:6px;line-height:6px;color:#e8e0dc;font-weight:400;font-family:'Liberation Serif', serif;font-style:italic;transform:scaleX(1.1243);transform-origin:0 0;">The climate crisis is also a crisis of culture, and thus of the imagination. The</div>
<div class="t" style="left:53px;top:585.0px;font-size:6px;line-height:6px;color:#e8e0dc;font-weight:400;font-family:'Liberation Serif', serif;font-style:italic;transform:scaleX(1.1361);transform-origin:0 0;">two aspects of the crisis are so deeply linked that it is hard to say which one</div>
<div class="t" style="left:53px;top:592.0px;font-size:6px;line-height:6px;color:#e8e0dc;font-weight:400;font-family:'Liberation Serif', serif;font-style:italic;transform:scaleX(1.1611);transform-origin:0 0;">feeds the other.</div>
<div class="t" style="left:54px;top:663.3px;font-size:4.5px;line-height:4.5px;color:#c9a24e;font-weight:400;font-family:'Liberation Serif', serif;font-style:italic;transform:scaleX(0.9791);transform-origin:0 0;">— Amitav Ghosh, The Great Derangement (2016)</div>
<div class="t" style="left:6.7px;top:541.5px;font-size:20px;line-height:20px;color:#5a5a5a;font-weight:400;font-family:'Liberation Sans', sans-serif;font-style:normal;transform:scaleX(0.9213);transform-origin:0 0;">17</div>
<div style="position:absolute;left:37.7px;top:714.5px;width:249.8px;height:140.3px;background:#ffffff;box-sizing:border-box;border:1px solid #d3d3d3;"></div>
<div style="position:absolute;left:40px;top:715px;width:246px;height:139px;background:#2d2c31;"></div>
<div style="position:absolute;left:40px;top:715px;width:9px;height:139px;background:#b3433a;"></div>
<div class="t" style="left:55px;top:777.9px;font-size:14px;line-height:14px;color:#f4f4f4;font-weight:700;font-family:'Liberation Serif', serif;font-style:normal;transform:scaleX(1.1375);transform-origin:0 0;">Part VI: Apocalyptic Irony</div>
<div class="t" style="left:6.7px;top:711.5px;font-size:20px;line-height:20px;color:#5a5a5a;font-weight:400;font-family:'Liberation Sans', sans-serif;font-style:normal;transform:scaleX(0.9213);transform-origin:0 0;">18</div>
<div style="position:absolute;left:37.7px;top:883.5px;width:249.8px;height:140.3px;background:#ffffff;box-sizing:border-box;border:1px solid #d3d3d3;"></div>
<div style="position:absolute;left:40px;top:884px;width:246px;height:139px;background:#1f1e22;"></div>
<div style="position:absolute;left:40px;top:884px;width:5px;height:139px;background:#b3433a;"></div>
<div class="t" style="left:52px;top:898.3px;font-size:10.5px;line-height:10.5px;color:#f0f0f0;font-weight:700;font-family:'Liberation Serif', serif;font-style:normal;transform:scaleX(1.0621);transform-origin:0 0;">Apocalyptic Irony and Dark Comedy</div>
<div style="position:absolute;left:47px;top:915px;width:228px;height:1px;background:#b3433a;"></div>
<div style="position:absolute;left:54px;top:919.0px;width:2px;height:2px;background:#dcdcdc;"></div>
<div class="t" style="left:62.3px;top:918.1px;font-size:4.6px;line-height:4.6px;color:#dcdcdc;font-weight:400;font-family:'Liberation Sans', sans-serif;font-style:normal;transform:scaleX(1.0316);transform-origin:0 0;">A counter-tradition to the elegiac mode: disaster as occasion for satiric defamiliarisation, black</div>
<div class="t" style="left:62.3px;top:924.4px;font-size:4.6px;line-height:4.6px;color:#dcdcdc;font-weight:400;font-family:'Liberation Sans', sans-serif;font-style:normal;transform:scaleX(1.0071);transform-origin:0 0;">comedy, and ironic distance.</div>
<div style="position:absolute;left:54px;top:931.6px;width:2px;height:2px;background:#dcdcdc;"></div>
<div class="t" style="left:62.3px;top:930.7px;font-size:4.6px;line-height:4.6px;color:#dcdcdc;font-weight:400;font-family:'Liberation Sans', sans-serif;font-style:normal;transform:scaleX(1.0120);transform-origin:0 0;">Irony as survival strategy  — Philip Roth&#x27;s The Plot Against America (2004) uses alternate history</div>
<div class="t" style="left:62.3px;top:937.0px;font-size:4.6px;line-height:4.6px;color:#dcdcdc;font-weight:400;font-family:'Liberation Sans', sans-serif;font-style:normal;transform:scaleX(1.0264);transform-origin:0 0;">irony to defamiliarise fascism&#x27;s domestic banality.</div>
<div style="position:absolute;left:54px;top:944.2px;width:2px;height:2px;background:#dcdcdc;"></div>
<div class="t" style="left:62.3px;top:943.3px;font-size:4.6px;line-height:4.6px;color:#dcdcdc;font-weight:400;font-family:'Liberation Sans', sans-serif;font-style:normal;transform:scaleX(1.0283);transform-origin:0 0;">DeLillo&#x27;s &#x27;Most Photographed Barn&#x27;: the disaster of hyperreality laughed at; the joke is also the</div>
<div class="t" style="left:62.3px;top:949.6px;font-size:4.6px;line-height:4.6px;color:#dcdcdc;font-weight:400;font-family:'Liberation Sans', sans-serif;font-style:normal;transform:scaleX(1.0541);transform-origin:0 0;">horror.</div>
<div style="position:absolute;left:54px;top:956.8px;width:2px;height:2px;background:#dcdcdc;"></div>
<div class="t" style="left:62.3px;top:955.9px;font-size:4.6px;line-height:4.6px;color:#dcdcdc;font-weight:400;font-family:'Liberation Sans', sans-serif;font-style:normal;transform:scaleX(1.0193);transform-origin:0 0;">Douglas Coupland&#x27;s Generation A (2009) uses comedy of millennial anomie to frame species  -level</div>
<div class="t" style="left:62.3px;top:962.2px;font-size:4.6px;line-height:4.6px;color:#dcdcdc;font-weight:400;font-family:'Liberation Sans', sans-serif;font-style:normal;transform:scaleX(1.0119);transform-origin:0 0;">ecological risk.</div>
<div style="position:absolute;left:54px;top:969.4px;width:2px;height:2px;background:#dcdcdc;"></div>
<div class="t" style="left:62.3px;top:968.5px;font-size:4.6px;line-height:4.6px;color:#dcdcdc;font-weight:400;font-family:'Liberation Sans', sans-serif;font-style:normal;transform:scaleX(1.0292);transform-origin:0 0;">Margaret Atwood&#x27;s MaddAddam trilogy: biotechnological apocalypse rendered in a carnivalesque</div>
<div class="t" style="left:62.3px;top:974.8px;font-size:4.6px;line-height:4.6px;color:#dcdcdc;font-weight:400;font-family:'Liberation Sans', sans-serif;font-style:normal;transform:scaleX(1.0163);transform-origin:0 0;">register — catastrophe as corporate satire.</div>
<div style="position:absolute;left:54px;top:982.0px;width:2px;height:2px;background:#dcdcdc;"></div>
<div class="t" style="left:62.3px;top:981.1px;font-size:4.6px;line-height:4.6px;color:#dcdcdc;font-weight:400;font-family:'Liberation Sans', sans-serif;font-style:normal;transform:scaleX(1.0251);transform-origin:0 0;">Theoretical framing: Fredric Jameson&#x27;s &#x27;political unconscious&#x27;  — apocalyptic humour as displaced</div>
<div class="t" style="left:62.3px;top:987.4px;font-size:4.6px;line-height:4.6px;color:#dcdcdc;font-weight:400;font-family:'Liberation Sans', sans-serif;font-style:normal;transform:scaleX(1.0381);transform-origin:0 0;">social critique when direct critique is culturally unavailable.</div>
<div class="t" style="left:6.7px;top:880.5px;font-size:20px;line-height:20px;color:#5a5a5a;font-weight:400;font-family:'Liberation Sans', sans-serif;font-style:normal;transform:scaleX(0.9213);transform-origin:0 0;">19</div>
<div style="position:absolute;left:37.7px;top:1053.5px;width:249.8px;height:140.3px;background:#ffffff;box-sizing:border-box;border:1px solid #d3d3d3;"></div>
<div style="position:absolute;left:40px;top:1054px;width:246px;height:139px;background:#2d2c31;"></div>
<div style="position:absolute;left:40px;top:1054px;width:9px;height:139px;background:#b3433a;"></div>
<div class="t" style="left:55px;top:1107.9px;font-size:14px;line-height:14px;color:#f4f4f4;font-weight:700;font-family:'Liberation Serif', serif;font-style:normal;transform:scaleX(1.1586);transform-origin:0 0;">Part VII: Postcolonial</div>
<div class="t" style="left:55px;top:1124.9px;font-size:14px;line-height:14px;color:#f4f4f4;font-weight:700;font-family:'Liberation Serif', serif;font-style:normal;transform:scaleX(1.2050);transform-origin:0 0;">Perspectives</div>
<div class="t" style="left:6.5px;top:1050.5px;font-size:20px;line-height:20px;color:#5a5a5a;font-weight:400;font-family:'Liberation Sans', sans-serif;font-style:normal;transform:scaleX(0.9213);transform-origin:0 0;">20</div>
<div style="position:absolute;left:34px;top:1217.6px;width:257px;height:150px;background:#e2693f;"></div>
<div style="position:absolute;left:39px;top:1222.6px;width:247px;height:140.2px;background:#ffffff;"></div>
<div style="position:absolute;left:40px;top:1223.6px;width:245px;height:138.2px;background:#1f1e22;"></div>
<div style="position:absolute;left:40px;top:1223.6px;width:5px;height:138.2px;background:#b3433a;"></div>
<div class="t" style="left:52px;top:1235.8px;font-size:10.5px;line-height:10.5px;color:#f0f0f0;font-weight:700;font-family:'Liberation Serif', serif;font-style:normal;transform:scaleX(1.0287);transform-origin:0 0;">Postcolonial Disaster Narratives</div>
<div style="position:absolute;left:47px;top:1250.3px;width:229px;height:1.4px;background:#b3433a;"></div>
<div style="position:absolute;left:47px;top:1255.5px;width:109px;height:96px;background:#2e2d32;"></div>
<div style="position:absolute;left:164px;top:1255.5px;width:109.5px;height:96px;background:#2e2d32;"></div>
<div class="t" style="left:51px;top:1260.0px;font-size:5px;line-height:5px;color:#d2a650;font-weight:700;font-family:'Liberation Serif', serif;font-style:normal;transform:scaleX(1.1355);transform-origin:0 0;">The &#x27;Slow&#x27; Disaster</div>
<div class="t" style="left:168px;top:1260.0px;font-size:5px;line-height:5px;color:#d2a650;font-weight:700;font-family:'Liberation Serif', serif;font-style:normal;transform:scaleX(1.1420);transform-origin:0 0;">Counter-Narratives</div>
<div style="position:absolute;left:52px;top:1271.5px;width:1.5px;height:1.5px;background:#e0e0e0;"></div>
<div class="t" style="left:60px;top:1270.1px;font-size:4.6px;line-height:4.6px;color:#e6e6e6;font-weight:400;font-family:'Liberation Sans', sans-serif;font-style:normal;transform:scaleX(0.8803);transform-origin:0 0;">Rob Nixon&#x27;s Slow Violence: catastrophes that</div>
<div class="t" style="left:60px;top:1275.6px;font-size:4.6px;line-height:4.6px;color:#e6e6e6;font-weight:400;font-family:'Liberation Sans', sans-serif;font-style:normal;transform:scaleX(0.8895);transform-origin:0 0;">unfold across generations in colonised bodies and</div>
<div class="t" style="left:60px;top:1281.1px;font-size:4.6px;line-height:4.6px;color:#e6e6e6;font-weight:400;font-family:'Liberation Sans', sans-serif;font-style:normal;transform:scaleX(0.9377);transform-origin:0 0;">territories are rendered invisible by Western</div>
<div class="t" style="left:60px;top:1286.6px;font-size:4.6px;line-height:4.6px;color:#e6e6e6;font-weight:400;font-family:'Liberation Sans', sans-serif;font-style:normal;transform:scaleX(0.9533);transform-origin:0 0;">narrative time.</div>
<div style="position:absolute;left:52px;top:1293.5px;width:1.5px;height:1.5px;background:#e0e0e0;"></div>
<div class="t" style="left:60px;top:1292.1px;font-size:4.6px;line-height:4.6px;color:#e6e6e6;font-weight:400;font-family:'Liberation Sans', sans-serif;font-style:normal;transform:scaleX(0.9366);transform-origin:0 0;">Colonial extraction as prior catastrophe; climate</div>
<div class="t" style="left:60px;top:1297.6px;font-size:4.6px;line-height:4.6px;color:#e6e6e6;font-weight:400;font-family:'Liberation Sans', sans-serif;font-style:normal;transform:scaleX(0.9680);transform-origin:0 0;">disaster as its continuation.</div>
<div style="position:absolute;left:52px;top:1304.5px;width:1.5px;height:1.5px;background:#e0e0e0;"></div>
<div class="t" style="left:60px;top:1303.1px;font-size:4.6px;line-height:4.6px;color:#e6e6e6;font-weight:400;font-family:'Liberation Sans', sans-serif;font-style:normal;transform:scaleX(0.8965);transform-origin:0 0;">Edwidge Danticat&#x27;s Brother I&#x27;m Dying (2007): the</div>
<div class="t" style="left:60px;top:1308.6px;font-size:4.6px;line-height:4.6px;color:#e6e6e6;font-weight:400;font-family:'Liberation Sans', sans-serif;font-style:normal;transform:scaleX(0.8942);transform-origin:0 0;">disaster of bureaucratic violence at US borders —</div>
<div class="t" style="left:60px;top:1314.1px;font-size:4.6px;line-height:4.6px;color:#e6e6e6;font-weight:400;font-family:'Liberation Sans', sans-serif;font-style:normal;transform:scaleX(0.9891);transform-origin:0 0;">institutional, slow, not spectacular.</div>
<div style="position:absolute;left:52px;top:1321.0px;width:1.5px;height:1.5px;background:#e0e0e0;"></div>
<div class="t" style="left:60px;top:1319.6px;font-size:4.6px;line-height:4.6px;color:#e6e6e6;font-weight:400;font-family:'Liberation Sans', sans-serif;font-style:normal;transform:scaleX(0.8870);transform-origin:0 0;">Indra Sinha&#x27;s Animal&#x27;s People (2007): Bhopal as</div>
<div class="t" style="left:60px;top:1325.1px;font-size:4.6px;line-height:4.6px;color:#e6e6e6;font-weight:400;font-family:'Liberation Sans', sans-serif;font-style:normal;transform:scaleX(0.9321);transform-origin:0 0;">ongoing disaster resisting closure.</div>
<div style="position:absolute;left:169px;top:1271.5px;width:1.5px;height:1.5px;background:#e0e0e0;"></div>
<div class="t" style="left:177px;top:1270.1px;font-size:4.6px;line-height:4.6px;color:#e6e6e6;font-weight:400;font-family:'Liberation Sans', sans-serif;font-style:normal;transform:scaleX(0.8411);transform-origin:0 0;">Chimamanda Ngozi Adichie: catastrophe as the</div>
<div class="t" style="left:177px;top:1275.6px;font-size:4.6px;line-height:4.6px;color:#e6e6e6;font-weight:400;font-family:'Liberation Sans', sans-serif;font-style:normal;transform:scaleX(0.9355);transform-origin:0 0;">condition of colonial modernity, not exceptional</div>
<div class="t" style="left:177px;top:1281.1px;font-size:4.6px;line-height:4.6px;color:#e6e6e6;font-weight:400;font-family:'Liberation Sans', sans-serif;font-style:normal;transform:scaleX(0.8869);transform-origin:0 0;">event.</div>
<div style="position:absolute;left:169px;top:1288.0px;width:1.5px;height:1.5px;background:#e0e0e0;"></div>
<div class="t" style="left:177px;top:1286.6px;font-size:4.6px;line-height:4.6px;color:#e6e6e6;font-weight:400;font-family:'Liberation Sans', sans-serif;font-style:normal;transform:scaleX(0.9229);transform-origin:0 0;">Nnedi Okofor&#x27;s Lagoon (2014): African first-</div>
<div class="t" style="left:177px;top:1292.1px;font-size:4.6px;line-height:4.6px;color:#e6e6e6;font-weight:400;font-family:'Liberation Sans', sans-serif;font-style:normal;transform:scaleX(0.9374);transform-origin:0 0;">contact sci-fi inverts Western apocalyptic</div>
<div class="t" style="left:177px;top:1297.6px;font-size:4.6px;line-height:4.6px;color:#e6e6e6;font-weight:400;font-family:'Liberation Sans', sans-serif;font-style:normal;transform:scaleX(0.9525);transform-origin:0 0;">anxieties.</div>
<div style="position:absolute;left:169px;top:1304.5px;width:1.5px;height:1.5px;background:#e0e0e0;"></div>
<div class="t" style="left:177px;top:1303.1px;font-size:4.6px;line-height:4.6px;color:#e6e6e6;font-weight:400;font-family:'Liberation Sans', sans-serif;font-style:normal;transform:scaleX(0.9262);transform-origin:0 0;">The Global South narrative refuses the tourist&#x27;s</div>
<div class="t" style="left:177px;top:1308.6px;font-size:4.6px;line-height:4.6px;color:#e6e6e6;font-weight:400;font-family:'Liberation Sans', sans-serif;font-style:normal;transform:scaleX(0.9293);transform-origin:0 0;">perspective — disaster is continuous, structural,</div>
<div class="t" style="left:177px;top:1314.1px;font-size:4.6px;line-height:4.6px;color:#e6e6e6;font-weight:400;font-family:'Liberation Sans', sans-serif;font-style:normal;transform:scaleX(0.9367);transform-origin:0 0;">and racialised.</div>
<div style="position:absolute;left:169px;top:1321.0px;width:1.5px;height:1.5px;background:#e0e0e0;"></div>
<div class="t" style="left:177px;top:1319.6px;font-size:4.6px;line-height:4.6px;color:#e6e6e6;font-weight:400;font-family:'Liberation Sans', sans-serif;font-style:normal;transform:scaleX(0.9081);transform-origin:0 0;">Challenging whose catastrophe counts as &#x27;literary&#x27;</div>
<div class="t" style="left:177px;top:1325.1px;font-size:4.6px;line-height:4.6px;color:#e6e6e6;font-weight:400;font-family:'Liberation Sans', sans-serif;font-style:normal;transform:scaleX(0.9138);transform-origin:0 0;">disaster worth representing.</div>
<div class="t" style="left:6.5px;top:1219.5px;font-size:20px;line-height:20px;color:#c8472c;font-weight:400;font-family:'Liberation Sans', sans-serif;font-style:normal;transform:scaleX(0.9213);transform-origin:0 0;">21</div>
<svg style="position:absolute;left:218px;top:1338px;" width="14" height="22" viewBox="0 0 14 22"><path d="M1 1 V17 L5 13.5 L8 20.5 L10.5 19.5 L7.5 12.5 L12.5 12.5 Z" fill="#fff" stroke="#111" stroke-width="1.2" stroke-linejoin="round"/></svg>
<div style="position:absolute;left:0;top:1385px;width:344px;height:69px;overflow:hidden">
<div style="position:absolute;left:37.7px;top:7.5px;width:249.8px;height:140.3px;background:#ffffff;box-sizing:border-box;border:1px solid #d3d3d3;"></div>
<div style="position:absolute;left:40px;top:8px;width:246px;height:139px;background:#2d2c31;"></div>
<div style="position:absolute;left:40px;top:8px;width:9px;height:139px;background:#b3433a;"></div>
<div class="t" style="left:55px;top:61.4px;font-size:14px;line-height:14px;color:#f4f4f4;font-weight:700;font-family:'Liberation Serif', serif;font-style:normal;transform:scaleX(1.1302);transform-origin:0 0;">Part VIII: Ethics of</div>
</div>
<div class="t" style="left:6.5px;top:1389.5px;font-size:20px;line-height:20px;color:#5a5a5a;font-weight:400;font-family:'Liberation Sans', sans-serif;font-style:normal;transform:scaleX(0.9213);transform-origin:0 0;">22</div>
<div style="position:absolute;left:462.7px;top:539px;width:1581.6px;height:890px;background:#1f1e22;"></div>
<div style="position:absolute;left:462.7px;top:539px;width:28.5px;height:890px;background:#b3433a;"></div>
<div class="t" style="left:544px;top:628.4px;font-size:61px;line-height:61px;color:#ffffff;font-weight:700;font-family:'Liberation Serif', serif;font-style:normal;transform:scaleX(1.1355);transform-origin:0 0;">Postcolonial Disaster Narratives</div>
<div style="position:absolute;left:511px;top:713.3px;width:1469.5px;height:6px;background:#b3433a;"></div>
<div style="position:absolute;left:510.8px;top:745.3px;width:694.9px;height:616.5px;background:#2e2d32;"></div>
<div style="position:absolute;left:1261.7px;top:745.3px;width:703.9px;height:616.5px;background:#2e2d32;"></div>
<div class="t" style="left:533.8px;top:775.2px;font-size:33px;line-height:33px;color:#d2a650;font-weight:700;font-family:'Liberation Serif', serif;font-style:normal;transform:scaleX(1.1004);transform-origin:0 0;">The &#x27;Slow&#x27; Disaster</div>
<div class="t" style="left:1285.4px;top:775.2px;font-size:33px;line-height:33px;color:#d2a650;font-weight:700;font-family:'Liberation Serif', serif;font-style:normal;transform:scaleX(1.1116);transform-origin:0 0;">Counter-Narratives</div>
<div style="position:absolute;left:536.3px;top:852.3px;width:10px;height:10px;border-radius:50%;background:#ededed"></div>
<div class="t" style="left:594.2px;top:844.1px;font-size:25.5px;line-height:25.5px;color:#ededed;font-weight:400;font-family:'Liberation Sans', sans-serif;font-style:normal;transform:scaleX(1.0149);transform-origin:0 0;">Rob Nixon&#x27;s Slow Violence: catastrophes that</div>
<div class="t" style="left:594.2px;top:879.5px;font-size:25.5px;line-height:25.5px;color:#ededed;font-weight:400;font-family:'Liberation Sans', sans-serif;font-style:normal;transform:scaleX(1.0197);transform-origin:0 0;">unfold across generations in colonised bodies and</div>
<div class="t" style="left:594.2px;top:913.7px;font-size:25.5px;line-height:25.5px;color:#ededed;font-weight:400;font-family:'Liberation Sans', sans-serif;font-style:normal;transform:scaleX(1.0395);transform-origin:0 0;">territories are rendered invisible by Western</div>
<div class="t" style="left:594.2px;top:947.6px;font-size:25.5px;line-height:25.5px;color:#ededed;font-weight:400;font-family:'Liberation Sans', sans-serif;font-style:normal;transform:scaleX(1.0497);transform-origin:0 0;">narrative time.</div>
<div style="position:absolute;left:536.3px;top:990.0px;width:10px;height:10px;border-radius:50%;background:#ededed"></div>
<div class="t" style="left:594.2px;top:981.8px;font-size:25.5px;line-height:25.5px;color:#ededed;font-weight:400;font-family:'Liberation Sans', sans-serif;font-style:normal;transform:scaleX(1.0323);transform-origin:0 0;">Colonial extraction as prior catastrophe; climate</div>
<div class="t" style="left:594.2px;top:1015.7px;font-size:25.5px;line-height:25.5px;color:#ededed;font-weight:400;font-family:'Liberation Sans', sans-serif;font-style:normal;transform:scaleX(1.0299);transform-origin:0 0;">disaster as its continuation.</div>
<div style="position:absolute;left:536.3px;top:1058.1px;width:10px;height:10px;border-radius:50%;background:#ededed"></div>
<div class="t" style="left:594.2px;top:1049.9px;font-size:25.5px;line-height:25.5px;color:#ededed;font-weight:400;font-family:'Liberation Sans', sans-serif;font-style:normal;transform:scaleX(1.0256);transform-origin:0 0;">Edwidge Danticat&#x27;s Brother I&#x27;m Dying (2007): the</div>
<div class="t" style="left:594.2px;top:1083.8px;font-size:25.5px;line-height:25.5px;color:#ededed;font-weight:400;font-family:'Liberation Sans', sans-serif;font-style:normal;transform:scaleX(1.0148);transform-origin:0 0;">disaster of bureaucratic violence at US borders —</div>
<div class="t" style="left:594.2px;top:1117.7px;font-size:25.5px;line-height:25.5px;color:#ededed;font-weight:400;font-family:'Liberation Sans', sans-serif;font-style:normal;transform:scaleX(1.0413);transform-origin:0 0;">institutional, slow, not spectacular.</div>
<div style="position:absolute;left:536.3px;top:1161.5px;width:10px;height:10px;border-radius:50%;background:#ededed"></div>
<div class="t" style="left:594.2px;top:1153.3px;font-size:25.5px;line-height:25.5px;color:#ededed;font-weight:400;font-family:'Liberation Sans', sans-serif;font-style:normal;transform:scaleX(1.0056);transform-origin:0 0;">Indra Sinha&#x27;s Animal&#x27;s People (2007): Bhopal as</div>
<div class="t" style="left:594.2px;top:1186.7px;font-size:25.5px;line-height:25.5px;color:#ededed;font-weight:400;font-family:'Liberation Sans', sans-serif;font-style:normal;transform:scaleX(1.0126);transform-origin:0 0;">ongoing disaster resisting closure.</div>
<div style="position:absolute;left:1287.2px;top:852.3px;width:10px;height:10px;border-radius:50%;background:#ededed"></div>
<div class="t" style="left:1344.6px;top:844.1px;font-size:25.5px;line-height:25.5px;color:#ededed;font-weight:400;font-family:'Liberation Sans', sans-serif;font-style:normal;transform:scaleX(1.0150);transform-origin:0 0;">Chimamanda Ngozi Adichie: catastrophe as the</div>
<div class="t" style="left:1344.6px;top:879.5px;font-size:25.5px;line-height:25.5px;color:#ededed;font-weight:400;font-family:'Liberation Sans', sans-serif;font-style:normal;transform:scaleX(1.0561);transform-origin:0 0;">condition of colonial modernity, not exceptional</div>
<div class="t" style="left:1344.6px;top:913.7px;font-size:25.5px;line-height:25.5px;color:#ededed;font-weight:400;font-family:'Liberation Sans', sans-serif;font-style:normal;transform:scaleX(1.0292);transform-origin:0 0;">event.</div>
<div style="position:absolute;left:1287.2px;top:955.8px;width:10px;height:10px;border-radius:50%;background:#ededed"></div>
<div class="t" style="left:1344.6px;top:947.6px;font-size:25.5px;line-height:25.5px;color:#ededed;font-weight:400;font-family:'Liberation Sans', sans-serif;font-style:normal;transform:scaleX(1.0265);transform-origin:0 0;">Nnedi Okofor&#x27;s Lagoon (2014): African first-</div>
<div class="t" style="left:1344.6px;top:981.8px;font-size:25.5px;line-height:25.5px;color:#ededed;font-weight:400;font-family:'Liberation Sans', sans-serif;font-style:normal;transform:scaleX(1.0336);transform-origin:0 0;">contact sci-fi inverts Western apocalyptic</div>
<div class="t" style="left:1344.6px;top:1015.7px;font-size:25.5px;line-height:25.5px;color:#ededed;font-weight:400;font-family:'Liberation Sans', sans-serif;font-style:normal;transform:scaleX(1.0136);transform-origin:0 0;">anxieties.</div>
<div style="position:absolute;left:1287.2px;top:1058.1px;width:10px;height:10px;border-radius:50%;background:#ededed"></div>
<div class="t" style="left:1344.6px;top:1049.9px;font-size:25.5px;line-height:25.5px;color:#ededed;font-weight:400;font-family:'Liberation Sans', sans-serif;font-style:normal;transform:scaleX(1.0281);transform-origin:0 0;">The Global South narrative refuses the tourist&#x27;s</div>
<div class="t" style="left:1344.6px;top:1083.8px;font-size:25.5px;line-height:25.5px;color:#ededed;font-weight:400;font-family:'Liberation Sans', sans-serif;font-style:normal;transform:scaleX(1.0290);transform-origin:0 0;">perspective — disaster is continuous, structural,</div>
<div class="t" style="left:1344.6px;top:1117.7px;font-size:25.5px;line-height:25.5px;color:#ededed;font-weight:400;font-family:'Liberation Sans', sans-serif;font-style:normal;transform:scaleX(1.0089);transform-origin:0 0;">and racialised.</div>
<div style="position:absolute;left:1287.2px;top:1161.5px;width:10px;height:10px;border-radius:50%;background:#ededed"></div>
<div class="t" style="left:1344.6px;top:1153.3px;font-size:25.5px;line-height:25.5px;color:#ededed;font-weight:400;font-family:'Liberation Sans', sans-serif;font-style:normal;transform:scaleX(1.0235);transform-origin:0 0;">Challenging whose catastrophe counts as &#x27;literary&#x27;</div>
<div class="t" style="left:1344.6px;top:1186.7px;font-size:25.5px;line-height:25.5px;color:#ededed;font-weight:400;font-family:'Liberation Sans', sans-serif;font-style:normal;transform:scaleX(1.0405);transform-origin:0 0;">disaster worth representing.</div>
<div style="position:absolute;left:2161px;top:524px;width:23px;height:927px;background:#dcdbde;"></div>
<div style="position:absolute;left:2161px;top:524px;width:21.5px;height:20.5px;background:#ffffff;box-sizing:border-box;border:1px solid #d0d0d0;"></div>
<svg style="position:absolute;left:2166px;top:531px;" width="11" height="6" viewBox="0 0 11 6"><path d="M0 6 L5.5 0 L11 6 Z" fill="#606060"/></svg>
<div style="position:absolute;left:2161px;top:1353px;width:21.5px;height:19.5px;background:#ffffff;box-sizing:border-box;border:1px solid #d0d0d0;"></div>
<svg style="position:absolute;left:2166px;top:1360px;" width="11" height="6" viewBox="0 0 11 6"><path d="M0 0 H11 L5.5 6 Z" fill="#606060"/></svg>
<div style="position:absolute;left:2161px;top:1372.5px;width:23px;height:78.5px;background:#e6e6e6;"></div>
<svg style="position:absolute;left:2166px;top:1380px;" width="11" height="12" viewBox="0 0 11 12"><path d="M0 6 L5.5 0 L11 6 Z M0 12 L5.5 6 L11 12 Z" fill="#6a6a6a"/></svg>
<svg style="position:absolute;left:2166px;top:1405px;" width="11" height="12" viewBox="0 0 11 12"><path d="M0 0 H11 L5.5 6 Z M0 6 H11 L5.5 12 Z" fill="#6a6a6a"/></svg>
<div style="position:absolute;left:347px;top:1451px;width:1837px;height:1px;background:#cfcfcf;"></div>
<div style="position:absolute;left:0px;top:1454px;width:2184px;height:1px;background:#d2d2d2;"></div>
<div style="position:absolute;left:0px;top:1455px;width:2184px;height:30px;background:#f1f0f2;"></div>
<div class="t" style="left:8.3px;top:1462.2px;font-size:15px;line-height:15px;color:#5c5c5c;font-weight:400;font-family:'Liberation Sans', sans-serif;font-style:normal;transform:scaleX(0.9457);transform-origin:0 0;">Слайд 21 з 29</div>
<svg style="position:absolute;left:124px;top:1460px;" width="21" height="18" viewBox="0 0 21 18"><path d="M0.7 0.7 H9.5 L10 1.5 L10.5 0.7 H19.3 V15.5 H10.5 L10 16.5 L9.5 15.5 H0.7 Z" fill="none" stroke="#6e6e6e" stroke-width="1.2"/><path d="M10 1.5 V16.5" stroke="#6e6e6e" stroke-width="1.1"/><path d="M12 8 L14.5 11 L19 4" fill="none" stroke="#6e6e6e" stroke-width="1.5"/></svg>
<div class="t" style="left:164px;top:1462.2px;font-size:15px;line-height:15px;color:#5c5c5c;font-weight:400;font-family:'Liberation Sans', sans-serif;font-style:normal;transform:scaleX(0.9627);transform-origin:0 0;">українська</div>
<svg style="position:absolute;left:1513.5px;top:1460px;" width="16" height="16" viewBox="0 0 16 16"><path d="M4 5 L8 1 L12 5 Z" fill="#777"/><path d="M0 8 H16 M0 11 H16 M0 14.5 H16" stroke="#777" stroke-width="1.2"/></svg>
<div class="t" style="left:1536px;top:1462.2px;font-size:15px;line-height:15px;color:#5c5c5c;font-weight:400;font-family:'Liberation Sans', sans-serif;font-style:normal;transform:scaleX(0.9571);transform-origin:0 0;">Нотатки</div>
<svg style="position:absolute;left:1613px;top:1460px;" width="17" height="16" viewBox="0 0 17 16"><path d="M0 0 H17 V11 H8 L4 16 V11 H0 Z" fill="#6a6a6a"/></svg>
<div class="t" style="left:1636px;top:1462.2px;font-size:15px;line-height:15px;color:#5c5c5c;font-weight:400;font-family:'Liberation Sans', sans-serif;font-style:normal;transform:scaleX(0.9719);transform-origin:0 0;">Примітки</div>
<div style="position:absolute;left:1720px;top:1455px;width:46px;height:30px;background:#c6c6c8;"></div>
<svg style="position:absolute;left:1734px;top:1461px;" width="17" height="16" viewBox="0 0 17 16"><rect x="0.7" y="0.7" width="15.6" height="14.6" fill="none" stroke="#6a6a6a" stroke-width="1.3"/><path d="M4 1 V15 M4 12 H16" stroke="#6a6a6a" stroke-width="1.2"/><rect x="7" y="3.5" width="6" height="5" fill="none" stroke="#6a6a6a" stroke-width="1.2"/></svg>
<svg style="position:absolute;left:1780px;top:1461px;" width="17" height="17" viewBox="0 0 17 17"><rect x="0.7" y="0.7" width="6" height="5.5" fill="none" stroke="#6a6a6a" stroke-width="1.3"/><rect x="10" y="0.7" width="6" height="5.5" fill="none" stroke="#6a6a6a" stroke-width="1.3"/><rect x="0.7" y="10" width="6" height="5.5" fill="none" stroke="#6a6a6a" stroke-width="1.3"/><rect x="10" y="10" width="6" height="5.5" fill="none" stroke="#6a6a6a" stroke-width="1.3"/></svg>
<svg style="position:absolute;left:1828px;top:1461px;" width="16" height="16" viewBox="0 0 16 16"><path d="M8 2 C5 0 2 0.5 0.7 1.5 V14 C2 13 5 13 8 15 C11 13 14 13 15.3 14 V1.5 C14 0.5 11 0 8 2 Z M8 2 V15" fill="none" stroke="#6a6a6a" stroke-width="1.3"/><path d="M3 5 H6 M3 8 H6 M10 5 H13 M10 8 H13" stroke="#6a6a6a" stroke-width="1"/></svg>
<svg style="position:absolute;left:1874px;top:1461px;" width="16" height="16" viewBox="0 0 16 16"><path d="M0 1 H16" stroke="#6a6a6a" stroke-width="1.4"/><rect x="1.7" y="2" width="12.6" height="6.5" fill="none" stroke="#6a6a6a" stroke-width="1.3"/><path d="M8 9 V15 M4 15 H12" stroke="#6a6a6a" stroke-width="1.4"/></svg>
<div style="position:absolute;left:1912px;top:1468px;width:10.5px;height:2.2px;background:#6a6a6a;"></div>
<div style="position:absolute;left:1927px;top:1468.5px;width:141.5px;height:1px;background:#a8a8a8;"></div>
<div style="position:absolute;left:2000px;top:1460.7px;width:5px;height:15.7px;background:#6a6a6a;"></div>
<svg style="position:absolute;left:2074px;top:1463px;" width="13" height="13" viewBox="0 0 13 13"><path d="M6.5 0 V13 M0 6.5 H13" stroke="#6a6a6a" stroke-width="2.2"/></svg>
<div class="t" style="left:2105px;top:1462.2px;font-size:15px;line-height:15px;color:#5c5c5c;font-weight:400;font-family:'Liberation Sans', sans-serif;font-style:normal;transform:scaleX(0.9285);transform-origin:0 0;">116%</div>
<svg style="position:absolute;left:2158.5px;top:1462px;" width="18" height="17" viewBox="0 0 18 17"><rect x="0.6" y="0.6" width="16.8" height="15.8" fill="none" stroke="#6a6a6a" stroke-width="1.2"/><path d="M9 3 V14 M3 8.5 H15" stroke="#8a8a8a" stroke-width="0.8"/><path d="M7.5 4.5 L9 2.5 L10.5 4.5 M7.5 12.5 L9 14.5 L10.5 12.5 M4.5 7 L2.5 8.5 L4.5 10 M13.5 7 L15.5 8.5 L13.5 10" fill="none" stroke="#6a6a6a" stroke-width="1"/></svg>
<div style="position:absolute;left:2212px;top:270px;width:639.5px;height:1260px;background:#232323;border-radius:16px;"></div>
<div style="position:absolute;left:2300px;top:288px;width:144px;height:144px;border-radius:18px;overflow:hidden;background:#222"><div style="position:absolute;left:0px;top:0px;width:144px;height:144px;background:linear-gradient(90deg,#131816 0%,#1b1f1d 38%,#5b4f46 42%,#62554b 88%,#efefee 91%,#ffffff 97%);border-radius:0;"></div><div style="position:absolute;left:17px;top:0px;width:4px;height:118px;background:#3a3c3a;border-radius:0;"></div><div style="position:absolute;left:52px;top:3px;width:16px;height:31px;background:transparent;border-radius:2px;border:2px solid #d8d8d8;"></div><div style="position:absolute;left:84px;top:10px;width:12px;height:23px;background:transparent;border-radius:2px;border:2px solid #e0e0e0;"></div><div style="position:absolute;left:96px;top:32px;width:15px;height:18px;background:#7a6a5e;border-radius:3px;"></div><div style="position:absolute;left:94px;top:73px;width:19px;height:34px;background:#806f63;border-radius:4px;"></div><div style="position:absolute;left:22px;top:16px;width:44px;height:70px;background:#6e5038;border-radius:20px 20px 10px 10px;filter:blur(1px);"></div><div style="position:absolute;left:38px;top:28px;width:16px;height:22px;background:#c29a86;border-radius:8px;filter:blur(1px);"></div><div style="position:absolute;left:54px;top:22px;width:12px;height:25px;background:#7a2030;border-radius:2px;"></div><div style="position:absolute;left:56px;top:34px;width:15px;height:20px;background:#d8b8a0;border-radius:6px;filter:blur(1px);"></div><div style="position:absolute;left:18px;top:52px;width:70px;height:70px;background:radial-gradient(circle at 50% 50%,#3e3c3c 0 1.2px,#262525 1.8px) 0 0/4px 4px;border-radius:16px 16px 0 0;"></div><div style="position:absolute;left:36px;top:55px;width:20px;height:65px;background:#131313;border-radius:0;"></div></div>
<div style="position:absolute;left:2620px;top:288px;width:144px;height:144px;border-radius:18px;overflow:hidden;background:#5f6bbf"></div>
<div class="t" style="left:2664.5px;top:321.4px;font-size:80px;line-height:80px;color:#ffffff;font-weight:400;font-family:'Liberation Sans', sans-serif;font-style:normal;transform:scaleX(0.9692);transform-origin:0 0;-webkit-text-stroke:2.5px #fff;">H</div>
<div style="position:absolute;left:2216.5px;top:406px;width:277.9000000000001px;height:39px;background:rgba(31,31,31,0.97);border-radius:10px;"></div>
<svg style="position:absolute;left:2222.5px;top:413px;" width="27" height="27" viewBox="0 0 27 27"><rect x="8" y="1" width="10" height="20" rx="5" fill="#d9403a"/><path d="M13 20 V24 M8 24.5 H18" stroke="#d9403a" stroke-width="2.4"/><path d="M2 26 L26 2" stroke="#232323" stroke-width="5"/><path d="M2 26 L26 2" stroke="#dc3f38" stroke-width="2.6" stroke-linecap="round"/></svg>
<div class="t" style="left:2253.0px;top:412.6px;font-size:25px;line-height:25px;color:#ffffff;font-weight:500;font-family:'Liberation Sans', sans-serif;font-style:normal;transform:scaleX(1.0208);transform-origin:0 0;-webkit-text-stroke:0.45px #fff;">Євгенія Черниченко</div>
<div style="position:absolute;left:2536.6px;top:406px;width:245.4000000000001px;height:39px;background:rgba(30,31,45,0.97);border-radius:10px;"></div>
<svg style="position:absolute;left:2542.6px;top:413px;" width="27" height="27" viewBox="0 0 27 27"><rect x="8" y="1" width="10" height="20" rx="5" fill="#d9403a"/><path d="M13 20 V24 M8 24.5 H18" stroke="#d9403a" stroke-width="2.4"/><path d="M2 26 L26 2" stroke="#232323" stroke-width="5"/><path d="M2 26 L26 2" stroke="#dc3f38" stroke-width="2.6" stroke-linecap="round"/></svg>
<div class="t" style="left:2573.1px;top:412.6px;font-size:25px;line-height:25px;color:#ffffff;font-weight:500;font-family:'Liberation Sans', sans-serif;font-style:normal;transform:scaleX(0.9907);transform-origin:0 0;-webkit-text-stroke:0.45px #fff;">Наталя Іваницька</div>
<div style="position:absolute;left:2300px;top:468px;width:144px;height:144px;border-radius:18px;overflow:hidden;background:#eee"><div style="position:absolute;left:0px;top:0px;width:144px;height:144px;background:linear-gradient(180deg,#efede9 0%,#ebe5de 30%,#e0d8ce 100%);border-radius:0;"></div><div style="position:absolute;left:0px;top:0px;width:73px;height:35px;background:repeating-linear-gradient(90deg,#f6f5f3 0 5px,#e8e6e2 5px 8px);border-radius:0;"></div><div style="position:absolute;left:73px;top:5px;width:52px;height:35px;background:#c8a27a;border-radius:3px;filter:blur(1px);"></div><div style="position:absolute;left:122px;top:12px;width:22px;height:26px;background:#d9d6d0;border-radius:0;"></div><div style="position:absolute;left:0px;top:30px;width:40px;height:114px;background:repeating-linear-gradient(180deg,#b39a84 0 9px,#c8b29c 9px 13px);border-radius:6px 0 0 0;"></div><div style="position:absolute;left:40px;top:7px;width:46px;height:46px;background:#2a1e1c;border-radius:22px 22px 14px 14px;filter:blur(1px);"></div><div style="position:absolute;left:51px;top:18px;width:25px;height:30px;background:#e0b49e;border-radius:12px;filter:blur(1px);"></div><div style="position:absolute;left:30px;top:46px;width:72px;height:98px;background:#f3eee8;border-radius:18px 18px 0 0;"></div><div style="position:absolute;left:30px;top:86px;width:16px;height:58px;background:#e2b29a;border-radius:8px;"></div><div style="position:absolute;left:88px;top:86px;width:15px;height:58px;background:#dcae96;border-radius:8px;"></div><div style="position:absolute;left:56px;top:100px;width:30px;height:4px;background:#cfcac4;border-radius:0;"></div></div>
<div style="position:absolute;left:2620px;top:468px;width:144px;height:144px;border-radius:18px;overflow:hidden;background:#8a7668"></div>
<div class="t" style="left:2671px;top:500.3px;font-size:80px;line-height:80px;color:#ffffff;font-weight:400;font-family:'Liberation Sans', sans-serif;font-style:normal;transform:scaleX(0.9003);transform-origin:0 0;-webkit-text-stroke:2.5px #fff;">T</div>
<div style="position:absolute;left:2216.5px;top:586px;width:273.5px;height:39px;background:rgba(31,31,31,0.97);border-radius:10px;"></div>
<svg style="position:absolute;left:2222.5px;top:593px;" width="27" height="27" viewBox="0 0 27 27"><rect x="8" y="1" width="10" height="20" rx="5" fill="#d9403a"/><path d="M13 20 V24 M8 24.5 H18" stroke="#d9403a" stroke-width="2.4"/><path d="M2 26 L26 2" stroke="#232323" stroke-width="5"/><path d="M2 26 L26 2" stroke="#dc3f38" stroke-width="2.6" stroke-linecap="round"/></svg>
<div class="t" style="left:2253.0px;top:592.5px;font-size:25px;line-height:25px;color:#ffffff;font-weight:500;font-family:'Liberation Sans', sans-serif;font-style:normal;transform:scaleX(1.0078);transform-origin:0 0;-webkit-text-stroke:0.45px #fff;">Nataliia Tymoshchuk</div>
<div style="position:absolute;left:2536.6px;top:586px;width:205.9000000000001px;height:39px;background:rgba(31,31,31,0.97);border-radius:10px;"></div>
<svg style="position:absolute;left:2542.6px;top:593px;" width="27" height="27" viewBox="0 0 27 27"><rect x="8" y="1" width="10" height="20" rx="5" fill="#d9403a"/><path d="M13 20 V24 M8 24.5 H18" stroke="#d9403a" stroke-width="2.4"/><path d="M2 26 L26 2" stroke="#232323" stroke-width="5"/><path d="M2 26 L26 2" stroke="#dc3f38" stroke-width="2.6" stroke-linecap="round"/></svg>
<div class="t" style="left:2573.1px;top:592.5px;font-size:25px;line-height:25px;color:#ffffff;font-weight:500;font-family:'Liberation Sans', sans-serif;font-style:normal;transform:scaleX(1.0132);transform-origin:0 0;-webkit-text-stroke:0.45px #fff;">Тетяна Ткачук</div>
<div class="t" style="left:2245px;top:700.8px;font-size:38.7px;line-height:38.7px;color:#ffffff;font-weight:400;font-family:'Liberation Sans', sans-serif;font-style:normal;transform:scaleX(1.0152);transform-origin:0 0;-webkit-text-stroke:0.5px #fff;">Уляна Шостак</div>
<div class="t" style="left:2576px;top:700.8px;font-size:38.7px;line-height:38.7px;color:#ffffff;font-weight:400;font-family:'Liberation Sans', sans-serif;font-style:normal;transform:scaleX(0.9990);transform-origin:0 0;-webkit-text-stroke:0.5px #fff;">Olga Matsera</div>
<div style="position:absolute;left:2216.5px;top:766px;width:203.9000000000001px;height:39px;background:rgba(31,31,31,0.97);border-radius:10px;"></div>
<svg style="position:absolute;left:2222.5px;top:773px;" width="27" height="27" viewBox="0 0 27 27"><rect x="8" y="1" width="10" height="20" rx="5" fill="#d9403a"/><path d="M13 20 V24 M8 24.5 H18" stroke="#d9403a" stroke-width="2.4"/><path d="M2 26 L26 2" stroke="#232323" stroke-width="5"/><path d="M2 26 L26 2" stroke="#dc3f38" stroke-width="2.6" stroke-linecap="round"/></svg>
<div class="t" style="left:2253.0px;top:772.5px;font-size:25px;line-height:25px;color:#ffffff;font-weight:500;font-family:'Liberation Sans', sans-serif;font-style:normal;transform:scaleX(0.9992);transform-origin:0 0;-webkit-text-stroke:0.45px #fff;">Уляна Шостак</div>
<div style="position:absolute;left:2536.6px;top:766px;width:190.0999999999999px;height:39px;background:rgba(31,31,31,0.97);border-radius:10px;"></div>
<svg style="position:absolute;left:2542.6px;top:773px;" width="27" height="27" viewBox="0 0 27 27"><rect x="8" y="1" width="10" height="20" rx="5" fill="#d9403a"/><path d="M13 20 V24 M8 24.5 H18" stroke="#d9403a" stroke-width="2.4"/><path d="M2 26 L26 2" stroke="#232323" stroke-width="5"/><path d="M2 26 L26 2" stroke="#dc3f38" stroke-width="2.6" stroke-linecap="round"/></svg>
<div class="t" style="left:2573.1px;top:772.5px;font-size:25px;line-height:25px;color:#ffffff;font-weight:500;font-family:'Liberation Sans', sans-serif;font-style:normal;transform:scaleX(0.9889);transform-origin:0 0;-webkit-text-stroke:0.45px #fff;">Olga Matsera</div>
<div style="position:absolute;left:2300px;top:828px;width:144px;height:144px;border-radius:18px;overflow:hidden;background:#ddd"><div style="position:absolute;left:0px;top:0px;width:52px;height:75px;background:repeating-linear-gradient(90deg,#f2f1ee 0 5px,#dedcd8 5px 8px);border-radius:0;"></div><div style="position:absolute;left:52px;top:0px;width:92px;height:68px;background:linear-gradient(180deg,#ece8da,#dcd6c2);border-radius:0;"></div><div style="position:absolute;left:88px;top:2px;width:20px;height:6px;background:#fffbe8;border-radius:50%;filter:blur(2px);"></div><div style="position:absolute;left:112px;top:40px;width:16px;height:5px;background:#fffbe8;border-radius:50%;filter:blur(2px);"></div><div style="position:absolute;left:102px;top:66px;width:42px;height:24px;background:#6f92c4;border-radius:0;filter:blur(1px);"></div><div style="position:absolute;left:0px;top:75px;width:40px;height:69px;background:linear-gradient(180deg,#d8d2c0,#a8aaa4);border-radius:0;filter:blur(1px);"></div><div style="position:absolute;left:108px;top:78px;width:36px;height:66px;background:#b4b8b2;border-radius:0;filter:blur(1px);"></div><div style="position:absolute;left:118px;top:78px;width:14px;height:14px;background:#4aa0b8;border-radius:50%;filter:blur(1px);"></div><div style="position:absolute;left:5px;top:108px;width:10px;height:10px;background:#4aa0b8;border-radius:50%;filter:blur(1px);"></div><div style="position:absolute;left:32px;top:10px;width:72px;height:134px;background:linear-gradient(180deg,#4e3426 0%,#6e4a32 35%,#b88a5c 65%,#e2c292 100%);border-radius:36px 36px 16px 16px;filter:blur(1px);"></div><div style="position:absolute;left:58px;top:28px;width:40px;height:52px;background:#e6b698;border-radius:20px;filter:blur(1px);"></div><div style="position:absolute;left:20px;top:102px;width:50px;height:42px;background:#1a1616;border-radius:22px 10px 0 0;filter:blur(1px);"></div><div style="position:absolute;left:96px;top:104px;width:38px;height:40px;background:#1e1a1a;border-radius:10px 16px 0 0;filter:blur(1px);"></div><div style="position:absolute;left:84px;top:84px;width:22px;height:32px;background:#dcae92;border-radius:10px;filter:blur(1px);"></div></div>
<div style="position:absolute;left:2620px;top:828px;width:144px;height:144px;border-radius:18px;overflow:hidden;background:#111"><div style="position:absolute;left:0px;top:0px;width:144px;height:144px;background:#0c0d0a;border-radius:0;"></div><div style="position:absolute;left:-6px;top:40px;width:26px;height:70px;background:#6a6a5a;border-radius:40%;filter:blur(5px);"></div><div style="position:absolute;left:20px;top:-10px;width:60px;height:20px;background:#4a4a3c;border-radius:40%;filter:blur(6px);"></div><div style="position:absolute;left:0px;top:100px;width:20px;height:44px;background:#3a4a30;border-radius:30%;filter:blur(4px);"></div><div style="position:absolute;left:16px;top:8px;width:118px;height:136px;background:#2b1d18;border-radius:56px 56px 24px 24px;filter:blur(2px);"></div><div style="position:absolute;left:40px;top:46px;width:60px;height:70px;background:#b48868;border-radius:28px;filter:blur(2px);"></div><div style="position:absolute;left:34px;top:18px;width:74px;height:34px;background:#2b1d18;border-radius:32px 32px 8px 8px;filter:blur(1px);"></div><div style="position:absolute;left:60px;top:70px;width:14px;height:30px;background:#d0a080;border-radius:6px;filter:blur(3px);"></div></div>
<div style="position:absolute;left:2216.5px;top:946px;width:102.80000000000018px;height:39px;background:rgba(31,31,31,0.97);border-radius:10px;"></div>
<svg style="position:absolute;left:2222.5px;top:953px;" width="27" height="27" viewBox="0 0 27 27"><rect x="8" y="1" width="10" height="20" rx="5" fill="#d9403a"/><path d="M13 20 V24 M8 24.5 H18" stroke="#d9403a" stroke-width="2.4"/><path d="M2 26 L26 2" stroke="#232323" stroke-width="5"/><path d="M2 26 L26 2" stroke="#dc3f38" stroke-width="2.6" stroke-linecap="round"/></svg>
<div class="t" style="left:2253.0px;top:952.5px;font-size:25px;line-height:25px;color:#ffffff;font-weight:500;font-family:'Liberation Sans', sans-serif;font-style:normal;transform:scaleX(0.9755);transform-origin:0 0;-webkit-text-stroke:0.45px #fff;">Ірина</div>
<div style="position:absolute;left:2536.6px;top:946px;width:254.70000000000027px;height:39px;background:rgba(31,31,31,0.97);border-radius:10px;"></div>
<svg style="position:absolute;left:2542.6px;top:953px;" width="27" height="27" viewBox="0 0 27 27"><rect x="8" y="1" width="10" height="20" rx="5" fill="#d9403a"/><path d="M13 20 V24 M8 24.5 H18" stroke="#d9403a" stroke-width="2.4"/><path d="M2 26 L26 2" stroke="#232323" stroke-width="5"/><path d="M2 26 L26 2" stroke="#dc3f38" stroke-width="2.6" stroke-linecap="round"/></svg>
<div class="t" style="left:2573.1px;top:952.5px;font-size:25px;line-height:25px;color:#ffffff;font-weight:500;font-family:'Liberation Sans', sans-serif;font-style:normal;transform:scaleX(1.0039);transform-origin:0 0;-webkit-text-stroke:0.45px #fff;">Liliia Tereshchenko</div>
<div style="position:absolute;left:2300px;top:1008px;width:144px;height:144px;border-radius:18px;overflow:hidden;background:#555"><div style="position:absolute;left:0px;top:0px;width:144px;height:144px;background:linear-gradient(90deg,#3a3228 0%,#8a6a48 38%,#c8c4bc 42%,#d0ccc4 100%);border-radius:0;"></div><div style="position:absolute;left:0px;top:0px;width:58px;height:144px;background:repeating-linear-gradient(90deg,#3a4034 0 6px,#b08a60 6px 12px,#4a5040 12px 22px);border-radius:0;filter:blur(1px);"></div><div style="position:absolute;left:0px;top:40px;width:58px;height:4px;background:#b08a60;border-radius:0;"></div><div style="position:absolute;left:0px;top:100px;width:58px;height:4px;background:#b08a60;border-radius:0;"></div><div style="position:absolute;left:28px;top:25px;width:10px;height:14px;background:#e8e8e4;border-radius:2px;filter:blur(1px);"></div><div style="position:absolute;left:72px;top:4px;width:90px;height:140px;background:#d6d2ca;border-radius:45px 45px 0 0;filter:blur(1px);"></div><div style="position:absolute;left:78px;top:12px;width:80px;height:132px;background:#5a564a;border-radius:40px 40px 0 0;filter:blur(1px);"></div><div style="position:absolute;left:112px;top:40px;width:32px;height:104px;background:#9a9486;border-radius:24px 24px 0 0;filter:blur(1px);"></div><div style="position:absolute;left:53px;top:38px;width:68px;height:106px;background:#5a3a28;border-radius:30px 30px 8px 8px;filter:blur(1px);"></div><div style="position:absolute;left:60px;top:46px;width:28px;height:30px;background:#c48f74;border-radius:12px;filter:blur(1px);"></div><div style="position:absolute;left:58px;top:72px;width:66px;height:72px;background:#2c2d2a;border-radius:20px 20px 0 0;filter:blur(1px);"></div><div style="position:absolute;left:124px;top:92px;width:20px;height:52px;background:#dcd8d0;border-radius:0;filter:blur(1px);"></div></div>
<div style="position:absolute;left:2530px;top:988px;width:324px;height:183.4px;background:transparent;box-sizing:border-box;border:4px solid #72db70;"></div>
<div style="position:absolute;left:2620px;top:1008px;width:144px;height:144px;border-radius:18px;overflow:hidden;background:#3f5a24"><div style="position:absolute;left:0px;top:0px;width:144px;height:144px;background:radial-gradient(ellipse at 80% 20%,#8aa85a 0%,#5a7a38 40%,#3e5a28 100%);border-radius:0;"></div><div style="position:absolute;left:-10px;top:20px;width:40px;height:40px;background:#7a9a50;border-radius:50%;filter:blur(6px);"></div><div style="position:absolute;left:110px;top:60px;width:40px;height:50px;background:#6a8a44;border-radius:50%;filter:blur(6px);"></div><div style="position:absolute;left:18px;top:6px;width:118px;height:120px;background:#54463c;border-radius:56px 56px 40px 30px;filter:blur(2px);"></div><div style="position:absolute;left:40px;top:20px;width:60px;height:30px;background:#6e5e52;border-radius:50%;filter:blur(5px);"></div><div style="position:absolute;left:42px;top:64px;width:78px;height:80px;background:#d6a686;border-radius:30px;filter:blur(2px);"></div><div style="position:absolute;left:40px;top:52px;width:92px;height:20px;background:#54463c;border-radius:10px;filter:blur(1px);"></div><div style="position:absolute;left:28px;top:112px;width:16px;height:10px;background:#c03030;border-radius:4px;filter:blur(1px);"></div><div style="position:absolute;left:98px;top:124px;width:32px;height:20px;background:#a82a2a;border-radius:6px;filter:blur(1px);"></div></div>
<div style="position:absolute;left:2216.5px;top:1126px;width:247.5px;height:39px;background:rgba(31,31,31,0.97);border-radius:10px;"></div>
<svg style="position:absolute;left:2222.5px;top:1133px;" width="27" height="27" viewBox="0 0 27 27"><rect x="8" y="1" width="10" height="20" rx="5" fill="#d9403a"/><path d="M13 20 V24 M8 24.5 H18" stroke="#d9403a" stroke-width="2.4"/><path d="M2 26 L26 2" stroke="#232323" stroke-width="5"/><path d="M2 26 L26 2" stroke="#dc3f38" stroke-width="2.6" stroke-linecap="round"/></svg>
<div class="t" style="left:2253.0px;top:1132.5px;font-size:25px;line-height:25px;color:#ffffff;font-weight:500;font-family:'Liberation Sans', sans-serif;font-style:normal;transform:scaleX(1.0163);transform-origin:0 0;-webkit-text-stroke:0.45px #fff;">Butkivska Victoriia</div>
<div style="position:absolute;left:2536.6px;top:1126px;width:153.0999999999999px;height:39px;background:rgba(38,30,28,0.97);border-radius:10px;"></div>
<div class="t" style="left:2540.6px;top:1132.5px;font-size:25px;line-height:25px;color:#ffffff;font-weight:500;font-family:'Liberation Sans', sans-serif;font-style:normal;transform:scaleX(0.9860);transform-origin:0 0;-webkit-text-stroke:0.45px #fff;">olena koliasa</div>
<div style="position:absolute;left:2300px;top:1188px;width:144px;height:144px;border-radius:18px;overflow:hidden;background:#aa9050"><div style="position:absolute;left:0px;top:0px;width:144px;height:144px;background:linear-gradient(180deg,#62a2e8 0%,#7fb8f0 17%,#b89a58 30%,#bea060 60%,#a88c58 100%);border-radius:0;"></div><div style="position:absolute;left:90px;top:30px;width:40px;height:50px;background:#d0b070;border-radius:50%;filter:blur(8px);"></div><div style="position:absolute;left:0px;top:60px;width:40px;height:60px;background:#9a844c;border-radius:50%;filter:blur(8px);"></div><div style="position:absolute;left:26px;top:22px;width:62px;height:122px;background:#2e2018;border-radius:30px 30px 0 0;filter:blur(1px);"></div><div style="position:absolute;left:58px;top:30px;width:36px;height:58px;background:#e4b898;border-radius:16px;filter:blur(1px);"></div><div style="position:absolute;left:60px;top:88px;width:28px;height:22px;background:#c8ccd4;border-radius:0;"></div><div style="position:absolute;left:36px;top:102px;width:70px;height:42px;background:#2c3450;border-radius:10px;"></div><div style="position:absolute;left:40px;top:110px;width:40px;height:8px;background:#7a7a3a;border-radius:4px;"></div></div>
<div class="t" style="left:2559px;top:1240.1px;font-size:38.7px;line-height:38.7px;color:#ffffff;font-weight:400;font-family:'Liberation Sans', sans-serif;font-style:normal;transform:scaleX(1.0018);transform-origin:0 0;-webkit-text-stroke:0.5px #fff;">mariiaantonova</div>
<div style="position:absolute;left:2216.5px;top:1306px;width:173.5px;height:39px;background:rgba(31,31,31,0.97);border-radius:10px;"></div>
<svg style="position:absolute;left:2222.5px;top:1313px;" width="27" height="27" viewBox="0 0 27 27"><rect x="8" y="1" width="10" height="20" rx="5" fill="#d9403a"/><path d="M13 20 V24 M8 24.5 H18" stroke="#d9403a" stroke-width="2.4"/><path d="M2 26 L26 2" stroke="#232323" stroke-width="5"/><path d="M2 26 L26 2" stroke="#dc3f38" stroke-width="2.6" stroke-linecap="round"/></svg>
<div class="t" style="left:2253.0px;top:1312.5px;font-size:25px;line-height:25px;color:#ffffff;font-weight:500;font-family:'Liberation Sans', sans-serif;font-style:normal;transform:scaleX(0.9712);transform-origin:0 0;-webkit-text-stroke:0.45px #fff;">Anna Begas</div>
<div style="position:absolute;left:2536.6px;top:1306px;width:210.4000000000001px;height:39px;background:rgba(31,31,31,0.97);border-radius:10px;"></div>
<svg style="position:absolute;left:2542.6px;top:1313px;" width="27" height="27" viewBox="0 0 27 27"><rect x="8" y="1" width="10" height="20" rx="5" fill="#d9403a"/><path d="M13 20 V24 M8 24.5 H18" stroke="#d9403a" stroke-width="2.4"/><path d="M2 26 L26 2" stroke="#232323" stroke-width="5"/><path d="M2 26 L26 2" stroke="#dc3f38" stroke-width="2.6" stroke-linecap="round"/></svg>
<div class="t" style="left:2573.1px;top:1312.5px;font-size:25px;line-height:25px;color:#ffffff;font-weight:500;font-family:'Liberation Sans', sans-serif;font-style:normal;transform:scaleX(0.9916);transform-origin:0 0;-webkit-text-stroke:0.45px #fff;">mariiaantonova</div>
<div style="position:absolute;left:2300px;top:1368px;width:144px;height:144px;border-radius:18px;overflow:hidden;background:#888"><div style="position:absolute;left:0px;top:0px;width:144px;height:144px;background:linear-gradient(90deg,#3e424c 0%,#5a5e68 11%,#c8c080 30%,#b0a868 62%,#ddd0aa 84%,#bca888 100%);border-radius:0;"></div><div style="position:absolute;left:0px;top:0px;width:16px;height:144px;background:#34363c;border-radius:0;"></div><div style="position:absolute;left:16px;top:0px;width:6px;height:118px;background:#2a2622;border-radius:0;"></div><div style="position:absolute;left:68px;top:0px;width:4px;height:24px;background:#2e2a24;border-radius:0;"></div><div style="position:absolute;left:103px;top:0px;width:7px;height:90px;background:#2e2a24;border-radius:0;"></div><div style="position:absolute;left:20px;top:20px;width:124px;height:3px;background:#2e2a24;border-radius:0;"></div><div style="position:absolute;left:112px;top:30px;width:32px;height:80px;background:#e8d8b8;border-radius:30px 0 0 0;filter:blur(2px);"></div><div style="position:absolute;left:40px;top:18px;width:66px;height:58px;background:#7e4a2c;border-radius:32px 32px 22px 22px;filter:blur(1px);"></div><div style="position:absolute;left:56px;top:46px;width:42px;height:46px;background:#dcae96;border-radius:18px;filter:blur(1px);"></div><div style="position:absolute;left:10px;top:88px;width:120px;height:56px;background:#d9b09a;border-radius:44px 44px 0 0;filter:blur(1px);"></div><div style="position:absolute;left:28px;top:100px;width:82px;height:44px;background:#2a3cc8;border-radius:6px 6px 0 0;"></div><div style="position:absolute;left:42px;top:86px;width:54px;height:36px;background:#d9b09a;border-radius:0 0 27px 27px;filter:blur(1px);"></div></div>
<div style="position:absolute;left:2620px;top:1368px;width:144px;height:144px;border-radius:18px;overflow:hidden;background:#000000"></div>
<div style="position:absolute;left:2216.5px;top:1486px;width:199.5px;height:39px;background:rgba(32,31,44,0.97);border-radius:10px;"></div>
<div class="t" style="left:2220.5px;top:1492.5px;font-size:25px;line-height:25px;color:#ffffff;font-weight:500;font-family:'Liberation Sans', sans-serif;font-style:normal;transform:scaleX(0.9822);transform-origin:0 0;-webkit-text-stroke:0.45px #fff;">Marina Kaminska</div>
<div style="position:absolute;left:2536.6px;top:1486px;width:226.20000000000027px;height:39px;background:rgba(31,31,31,0.97);border-radius:10px;"></div>
<svg style="position:absolute;left:2542.6px;top:1493px;" width="27" height="27" viewBox="0 0 27 27"><rect x="8" y="1" width="10" height="20" rx="5" fill="#d9403a"/><path d="M13 20 V24 M8 24.5 H18" stroke="#d9403a" stroke-width="2.4"/><path d="M2 26 L26 2" stroke="#232323" stroke-width="5"/><path d="M2 26 L26 2" stroke="#dc3f38" stroke-width="2.6" stroke-linecap="round"/></svg>
<div class="t" style="left:2573.1px;top:1492.5px;font-size:25px;line-height:25px;color:#ffffff;font-weight:500;font-family:'Liberation Sans', sans-serif;font-style:normal;transform:scaleX(0.9924);transform-origin:0 0;-webkit-text-stroke:0.45px #fff;">Podoliak Maryna</div>
</body></html>
